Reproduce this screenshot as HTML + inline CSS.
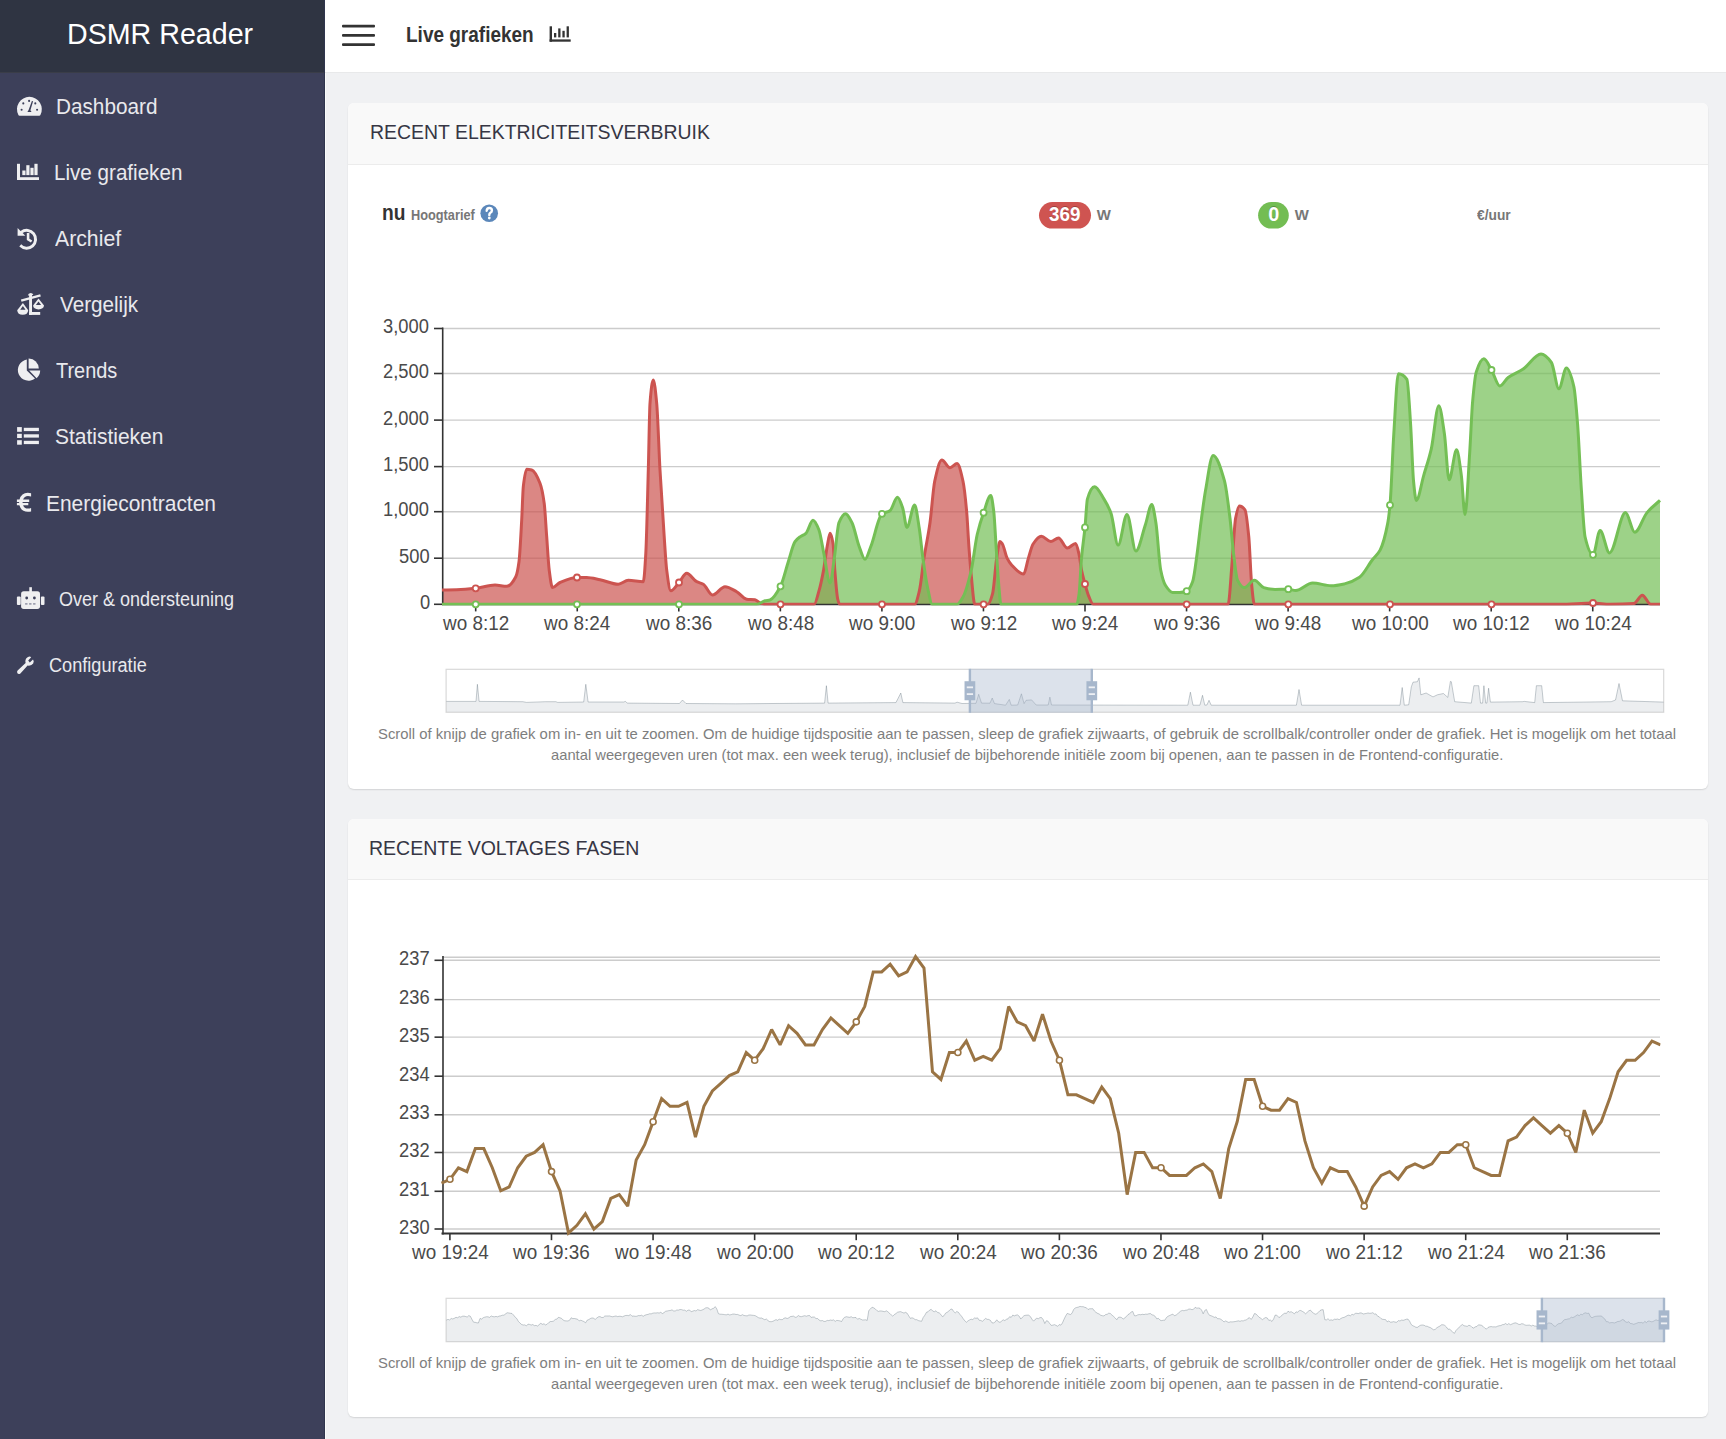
<!DOCTYPE html>
<html><head><meta charset="utf-8"><title>Live grafieken - DSMR Reader</title>
<style>
html,body{margin:0;padding:0}
body{width:1726px;height:1439px;overflow:hidden;position:relative;background:#f0f1f3;font-family:"Liberation Sans",sans-serif}
.sb{position:absolute;left:0;top:0;width:325px;height:1439px;background:#3d405a}
.sbh{position:absolute;left:0;top:0;width:325px;height:72px;background:#2f3442;border-bottom:1px solid #3a3d48}
.sbe{position:absolute;left:324px;top:0;width:1px;height:1439px;background:#30354d}
.sbw{position:absolute;left:325px;top:72px;width:1px;height:1367px;background:#fafbfb}
.tb{position:absolute;left:325px;top:0;width:1401px;height:72px;background:#fff;border-bottom:1px solid #e8e9ea}
.card{position:absolute;left:348px;width:1360px;background:#fff;border-radius:6px;box-shadow:0 1px 1.5px rgba(0,0,0,.12)}
.ch{position:absolute;left:0;top:0;width:1360px;height:61px;background:#f9f9f9;border-bottom:1px solid #ececec;border-radius:6px 6px 0 0}
svg{position:absolute;left:0;top:0}
.t{position:absolute;white-space:nowrap;line-height:1;transform-origin:0 0}
</style></head><body>
<div class="sb"></div><div class="sbh"></div><div class="sbe"></div><div class="sbw"></div>
<div class="tb"></div>
<div class="card" style="top:103px;height:686px"><div class="ch"></div></div>
<div class="card" style="top:819px;height:598px"><div class="ch" style="height:60px"></div></div>
<svg width="1726" height="1439" viewBox="0 0 1726 1439">
<g fill="#efeff1">
<path d="M19.6,115.8 Q18.6,115.8 18.3,114.8 A12.4,12.4 0 1 1 40.5,114.8 Q40.2,115.8 39.2,115.8 Z"/>
<g fill="#3d405a"><circle cx="23.3" cy="103.4" r="1.05"/><circle cx="29.1" cy="100.9" r="1.05"/><circle cx="35.3" cy="103.4" r="1.05"/><circle cx="21.6" cy="109.8" r="1.05"/><circle cx="37.1" cy="109.8" r="1.05"/><path d="M31.9,100.9 L33.1,101.2 L30.4,110.3 L31.6,112.1 L27.4,112.1 L28.6,110.1 Z"/></g>
<rect x="17" y="163.8" width="3" height="16.2"/><rect x="17" y="177.2" width="22" height="2.8"/><rect x="22.3" y="170.5" width="3.2" height="4.6"/><rect x="26.3" y="165.2" width="3.2" height="9.9"/><rect x="30.4" y="167.8" width="3.2" height="7.3"/><rect x="34.4" y="163.8" width="3.2" height="11.3"/>
<path d="M17.6,228 L17.6,235.8 L25.3,235.8 L22.6,233.1 A7.4,7.4 0 1 1 21.2,244.2 L19.3,246.6 A10.4,10.4 0 1 0 20.5,230.9 Z"/><path d="M26.8,233 L29.4,233 L29.4,238.7 L32.3,240.6 L30.9,242.6 L26.8,240 Z"/>
<path d="M20.9,299.4 L40.2,294.2 L40.8,296.6 L21.5,301.8 Z"/><path d="M27.8,295.6 Q28.4,293.1 30.6,293.1 Q32.8,293.1 33.3,295 Z"/><rect x="29.1" y="295" width="2.9" height="19.9"/><rect x="29.1" y="312" width="11.1" height="2.9"/><path d="M17.2,310.2 L22.9,303 L28.2,310.2 Q27.8,314.8 22.7,314.8 Q17.6,314.8 17.2,310.2 Z"/><path d="M33.1,305.6 L38.5,298.5 L44,305.6 Q43.6,309.4 38.5,309.4 Q33.5,309.4 33.1,305.6 Z"/>
<g fill="#3d405a"><path d="M20.2,309.7 L22.9,306.1 L25.5,309.7 Z"/><path d="M35.9,305.1 L38.5,301.6 L41.1,305.1 Z"/></g>
<path d="M26.8,359.6 L26.8,370.6 L35,378.4 A10.6,10.6 0 1 1 26.8,359.6 Z"/><path d="M28.6,358.6 A10,10 0 0 1 38.8,368.6 L28.6,368.6 Z"/><path d="M29.2,370.6 L40.2,370.6 A10.8,10.8 0 0 1 36.6,378.2 Z"/>
<rect x="17.1" y="427.1" width="4.7" height="4.7"/><rect x="23.8" y="427.8" width="15.1" height="3.3"/><rect x="17.1" y="433.8" width="4.7" height="4.2"/><rect x="23.8" y="434.3" width="15.1" height="3.3"/><rect x="17.1" y="440.2" width="4.7" height="4.5"/><rect x="23.8" y="440.8" width="15.1" height="3.3"/>
<path d="M31.1,493.2 L31.1,496.6 Q29.6,496 28,496 Q24.4,496 23.1,499.6 L29.2,499.6 L29.2,502 L22.6,502 L22.6,503 L28.3,503 L28.3,505.2 L23.1,505.2 Q24.2,508.6 28,508.6 Q29.6,508.6 31.1,508 L31.1,511.4 Q29.5,511.8 27.8,511.8 Q21.2,511.8 19.4,505.2 L16.9,505.2 L16.9,503 L19.1,503 L19.1,502 L16.9,502 L16.9,499.6 L19.5,499.6 Q21.4,492.8 27.8,492.8 Q29.5,492.8 31.1,493.2 Z"/>
<rect x="21.1" y="591.3" width="18.9" height="17.6" rx="2.6"/><rect x="29.3" y="587.2" width="2.6" height="5"/><rect x="16.9" y="596.4" width="3.8" height="8.5" rx="1"/><rect x="40.9" y="596.4" width="3.6" height="8.5" rx="1"/>
<g fill="#3d405a"><circle cx="26.7" cy="598" r="1.4"/><circle cx="34.4" cy="598" r="1.4"/></g><g fill="#8a8ca0"><rect x="25.1" y="603.2" width="2.4" height="1.4"/><rect x="29.1" y="603.2" width="2.4" height="1.4"/><rect x="33.1" y="603.2" width="2.4" height="1.4"/></g>
<path d="M17.6,670.6 L25.6,663 Q24.6,659.2 27.6,657.2 Q29.8,656 31.2,657.2 L28.2,660.4 L29.8,662.4 L33,659.4 Q34.4,661 33.2,663.6 Q31.4,666.2 27.6,665.6 L20.4,673.4 Q18.6,674.6 17.4,673.2 Q16.6,671.8 17.6,670.6 Z"/>
</g>
<g fill="#333"><rect x="342" y="24.8" width="33" height="2.8" rx="1"/><rect x="342" y="34" width="33" height="2.8" rx="1"/><rect x="342" y="43.2" width="33" height="2.8" rx="1"/></g>
<g fill="#333"><rect x="549.6" y="26.3" width="2.4" height="15.4"/><rect x="549.6" y="39.4" width="21.1" height="2.3"/><rect x="554" y="33" width="2.3" height="4.4"/><rect x="558.2" y="28.4" width="2.3" height="9"/><rect x="562.4" y="30.8" width="2.3" height="6.6"/><rect x="566.6" y="26.3" width="2.3" height="11.1"/></g>
<circle cx="489.2" cy="213.3" r="8.8" fill="#5b87ba"/>
<path d="M486.7,210.7 Q486.8,208 489.3,208 Q491.9,208 491.9,210.4 Q491.9,211.9 490.4,212.7 Q489.3,213.4 489.3,214.9" fill="none" stroke="#fff" stroke-width="2.4" stroke-linecap="round"/><circle cx="489.3" cy="218" r="1.4" fill="#fff"/>
<rect x="1039" y="202" width="52" height="26.6" rx="13.3" fill="#cf5451"/>
<rect x="1258.1" y="202" width="30.7" height="26.6" rx="13.3" fill="#73bd53"/>
<g>
<line x1="442" y1="558.2" x2="1660" y2="558.2" stroke="#cccccc" stroke-width="1.4"/>
<line x1="442" y1="511.7" x2="1660" y2="511.7" stroke="#cccccc" stroke-width="1.4"/>
<line x1="442" y1="466.6" x2="1660" y2="466.6" stroke="#cccccc" stroke-width="1.4"/>
<line x1="442" y1="420.1" x2="1660" y2="420.1" stroke="#cccccc" stroke-width="1.4"/>
<line x1="442" y1="373.5" x2="1660" y2="373.5" stroke="#cccccc" stroke-width="1.4"/>
<line x1="442" y1="328.5" x2="1660" y2="328.5" stroke="#cccccc" stroke-width="1.4"/>
</g>
<clipPath id="c1"><rect x="442" y="320" width="1219" height="285.5"/></clipPath>
<g clip-path="url(#c1)">
<path d="M442,590C446.9,589.9 451.8,589.85 456.7,589.7C463.03,589.5 469.37,588.95 475.7,588.3C482.13,587.64 488.57,585 495,585C498.9,585 502.8,586.3 506.7,586.3C509.73,586.3 512.77,582.51 515.8,576.7C516.87,574.66 517.93,569.49 519,561.7C519.9,555.13 520.8,536.16 521.7,520C522.23,510.42 522.77,491.45 523.3,486.7C524.43,476.62 525.57,469.2 526.7,469.2C528.37,469.2 530.03,469.55 531.7,470C534.47,470.75 537.23,476.29 540,483.3C541.4,486.85 542.8,493.06 544.2,503.3C545.03,509.4 545.87,525.58 546.7,536.7C547.53,547.82 548.37,563.55 549.2,570C550.3,578.51 551.4,587.5 552.5,587.5C555,587.5 557.5,583.57 560,582.5C565.67,580.07 571.33,577.5 577,577.5C580.23,577.5 583.47,577.5 586.7,577.5C591.13,577.5 595.57,578.83 600,579.7C606.1,580.89 612.2,584.2 618.3,584.2C621.63,584.2 624.97,580.3 628.3,580.3C633.3,580.3 638.3,581.7 643.3,581.7C644.13,581.7 644.97,567.42 645.8,553.3C646.63,539.18 647.47,500.19 648.3,470C648.87,449.47 649.43,410.62 650,403.3C651.1,389.08 652.2,380 653.3,380C654.43,380 655.57,391.67 656.7,403.3C657.8,414.59 658.9,450.34 660,470C661.4,495.02 662.8,516.57 664.2,536.7C665.03,548.68 665.87,563.65 666.7,570C668.07,580.42 669.43,590.8 670.8,590.8C673.53,590.8 676.27,585.5 679,582.5C681.57,579.68 684.13,573.3 686.7,573.3C690.03,573.3 693.37,580 696.7,581.7C698.9,582.82 701.1,582.97 703.3,584.2C706.37,585.91 709.43,595 712.5,595C716.67,595 720.83,586.7 725,586.7C728.9,586.7 732.8,589.56 736.7,591.7C740.03,593.53 743.37,598.84 746.7,599.2C749.47,599.5 752.23,599.38 755,599.7C756.93,599.92 758.87,602.74 760.8,603.3C762.53,603.8 764.27,604.3 766,604.3C770.83,604.3 775.67,604.3 780.5,604.3C791.73,604.3 802.97,604.3 814.2,604.3C815.77,604.3 817.33,596.6 818.9,591.2C820.47,585.8 822.03,578.46 823.6,570C824.8,563.52 826,552.66 827.2,546.3C828.17,541.18 829.13,533.3 830.1,533.3C831.1,533.3 832.1,537.86 833.1,544C833.67,547.48 834.23,563.08 834.8,570C835.8,582.22 836.8,595.5 837.8,599.5C838.4,601.9 839,604.3 839.6,604.3C853.73,604.3 867.87,604.3 882,604.3C892.87,604.3 903.73,604.3 914.6,604.3C916.17,604.3 917.73,597.46 919.3,591.2C920.87,584.94 922.43,568.2 924,558.1C926,545.21 928,536.95 930,522.7C931.57,511.54 933.13,488.53 934.7,481.3C937.07,470.38 939.43,460.1 941.8,460.1C944.53,460.1 947.27,467.8 950,467.8C952.37,467.8 954.73,463.6 957.1,463.6C959.07,463.6 961.03,472.32 963,481.3C964.2,486.78 965.4,497.74 966.6,510.9C967.37,519.3 968.13,535.79 968.9,546.3C969.7,557.26 970.5,567.97 971.3,575.9C972.47,587.47 973.63,604.3 974.8,604.3C977.73,604.3 980.67,604.3 983.6,604.3C985,604.3 986.4,604.3 987.8,604.3C989.4,604.3 991,599.36 992.6,593.6C993.97,588.68 995.33,566.68 996.7,558.1C997.8,551.19 998.9,541.6 1000,541.6C1000.8,541.6 1001.6,542.86 1002.4,544C1003.97,546.23 1005.53,554.95 1007.1,558.1C1008.67,561.25 1010.23,563.54 1011.8,565.2C1015.73,569.36 1019.67,574.1 1023.6,574.1C1025.2,574.1 1026.8,563.15 1028.4,558.1C1029.97,553.15 1031.53,546.35 1033.1,544C1035.83,539.9 1038.57,536.3 1041.3,536.3C1044.47,536.3 1047.63,541.6 1050.8,541.6C1053.37,541.6 1055.93,538 1058.5,538C1061.43,538 1064.37,548.1 1067.3,548.1C1070.07,548.1 1072.83,543.4 1075.6,543.4C1076.77,543.4 1077.93,549.51 1079.1,554.6C1079.9,558.09 1080.7,566 1081.5,570C1082.67,575.83 1083.83,579.78 1085,584C1086.2,588.35 1087.4,593.08 1088.6,595.9C1090.17,599.58 1091.73,604.3 1093.3,604.3C1124.43,604.3 1155.57,604.3 1186.7,604.3C1200.5,604.3 1214.3,604.3 1228.1,604.3C1229.37,604.3 1230.63,579.51 1231.9,565.1C1233.13,551.06 1234.37,524.54 1235.6,518.2C1236.87,511.69 1238.13,506 1239.4,506C1241.27,506 1243.13,507.36 1245,509.8C1246.27,511.46 1247.53,524.03 1248.8,537C1249.73,546.55 1250.67,574.42 1251.6,583.9C1252.53,593.38 1253.47,604.3 1254.4,604.3C1265.7,604.3 1277,604.3 1288.3,604.3C1322.2,604.3 1356.1,604.3 1390,604.3C1423.83,604.3 1457.67,604.3 1491.5,604.3C1514.33,604.3 1537.17,604.3 1560,604.3C1571,604.3 1582,603 1593,603C1598.67,603 1604.33,604.3 1610,604.3C1617.97,604.3 1625.93,604.11 1633.9,603.5C1636.7,603.29 1639.5,595.2 1642.3,595.2C1645.13,595.2 1647.97,604.3 1650.8,604.3C1653.87,604.3 1656.93,604.3 1660,604.3L1660,604.3 L442,604.3 Z" fill="#cc5450" fill-opacity="0.7"/>
<path d="M442,604.3C453.23,604.3 464.47,604.3 475.7,604.3C509.47,604.3 543.23,604.3 577,604.3C611,604.3 645,604.3 679,604.3C704.9,604.3 730.8,604.3 756.7,604.3C759.47,604.3 762.23,601.42 765,600.8C766.67,600.43 768.33,600.43 770,600C773.5,599.09 777,592.9 780.5,586.3C783.1,581.4 785.7,569.67 788.3,561.7C790.53,554.85 792.77,544.87 795,541.7C796.67,539.34 798.33,538.15 800,536.9C801.97,535.42 803.93,535.07 805.9,533.3C808.27,531.17 810.63,520.3 813,520.3C814.97,520.3 816.93,524.98 818.9,529.8C820.47,533.64 822.03,544.75 823.6,552.2C825.77,562.5 827.93,583 830.1,583C831.5,583 832.9,567.37 834.3,558.1C835.87,547.73 837.43,526.47 839,522.7C841.17,517.49 843.33,513.8 845.5,513.8C847.67,513.8 849.83,518.52 852,522.7C854.37,527.26 856.73,540.07 859.1,546.3C861.07,551.48 863.03,559.3 865,559.3C866.97,559.3 868.93,551.18 870.9,546.3C874.6,537.13 878.3,516.14 882,513.8C884.6,512.16 887.2,512.5 889.8,510.9C892.37,509.32 894.93,497.3 897.5,497.3C899.27,497.3 901.03,503.3 902.8,508.5C904.17,512.52 905.53,527.4 906.9,527.4C909.47,527.4 912.03,505 914.6,505C916.17,505 917.73,518.74 919.3,528.6C920.5,536.15 921.7,549.5 922.9,558.1C924.47,569.32 926.03,580.61 927.6,587.7C929.17,594.79 930.73,604.3 932.3,604.3C940.57,604.3 948.83,604.3 957.1,604.3C959.07,604.3 961.03,600.51 963,597.1C965.77,592.31 968.53,581.91 971.3,570C973.27,561.53 975.23,543.09 977.2,534.5C979.33,525.19 981.47,518.71 983.6,512.7C986,505.94 988.4,495.5 990.8,495.5C991.77,495.5 992.73,503.24 993.7,510.9C994.5,517.24 995.3,534.48 996.1,546.3C996.9,558.12 997.7,572.83 998.5,581.8C999.33,591.14 1000.17,604.3 1001,604.3C1026.27,604.3 1051.53,604.3 1076.8,604.3C1077.57,604.3 1078.33,599.01 1079.1,593.6C1079.9,587.96 1080.7,567.05 1081.5,558.1C1082.67,545.04 1083.83,539.24 1085,527.4C1085.8,519.28 1086.6,501.87 1087.4,499.1C1089.77,490.9 1092.13,486.7 1094.5,486.7C1097.67,486.7 1100.83,494.03 1104,499.1C1106.33,502.84 1108.67,506.72 1111,513.2C1113.37,519.78 1115.73,545.1 1118.1,545.1C1121.07,545.1 1124.03,514.4 1127,514.4C1129.97,514.4 1132.93,551 1135.9,551C1139.03,551 1142.17,534.4 1145.3,525.1C1147.47,518.67 1149.63,504.4 1151.8,504.4C1153.17,504.4 1154.53,514.39 1155.9,522.7C1157.5,532.43 1159.1,562.18 1160.7,570C1162.27,577.65 1163.83,582.81 1165.4,585.3C1167.77,589.06 1170.13,592.4 1172.5,592.4C1174.87,592.4 1177.23,592.4 1179.6,592.4C1181.97,592.4 1184.33,591.94 1186.7,591.2C1188.67,590.58 1190.63,586.92 1192.6,581.8C1194.17,577.72 1195.73,563.4 1197.3,552.2C1198.53,543.39 1199.77,531.28 1201,522C1202.53,510.47 1204.07,498.75 1205.6,490.1C1208.1,476 1210.6,455.4 1213.1,455.4C1216.87,455.4 1220.63,467.31 1224.4,480.7C1226.27,487.34 1228.13,503.1 1230,518.2C1231.27,528.44 1232.53,545.78 1233.8,555.8C1235.03,565.55 1236.27,577.67 1237.5,580.2C1239.7,584.72 1241.9,587.6 1244.1,587.6C1247.53,587.6 1250.97,580.2 1254.4,580.2C1257.53,580.2 1260.67,586.71 1263.8,587.6C1267.53,588.66 1271.27,589.5 1275,589.5C1279.43,589.5 1283.87,589.2 1288.3,589.2C1290.77,589.2 1293.23,590.5 1295.7,590.5C1301.33,590.5 1306.97,583 1312.6,583C1318.83,583 1325.07,585.8 1331.3,585.8C1335.7,585.8 1340.1,584.84 1344.5,583.9C1349.5,582.83 1354.5,580.66 1359.5,577.3C1363.87,574.36 1368.23,565.17 1372.6,559.5C1375.1,556.25 1377.6,554.71 1380.1,550.1C1382.6,545.49 1385.1,536.83 1387.6,523.9C1388.4,519.76 1389.2,513.68 1390,505.1C1391.27,491.52 1392.53,453.4 1393.8,433.8C1395.33,410.07 1396.87,373.8 1398.4,373.8C1401.23,373.8 1404.07,375.39 1406.9,379.4C1408.13,381.15 1409.37,405.78 1410.6,424.4C1411.57,438.99 1412.53,470.74 1413.5,480.7C1414.43,490.31 1415.37,500.4 1416.3,500.4C1418.8,500.4 1421.3,483.7 1423.8,475.1C1426.3,466.5 1428.8,459.69 1431.3,448.8C1433.8,437.91 1436.3,405.7 1438.8,405.7C1440.67,405.7 1442.53,421.3 1444.4,433.8C1445.97,444.29 1447.53,479.8 1449.1,479.8C1451.6,479.8 1454.1,449.8 1456.6,449.8C1458.17,449.8 1459.73,463.75 1461.3,475.1C1462.53,484.04 1463.77,514.5 1465,514.5C1466.57,514.5 1468.13,476.4 1469.7,452.6C1470.67,437.91 1471.63,412.77 1472.6,401.9C1473.83,388.03 1475.07,375.72 1476.3,371.9C1478.8,364.15 1481.3,358.8 1483.8,358.8C1486.37,358.8 1488.93,365.75 1491.5,370C1494.27,374.58 1497.03,386 1499.8,386C1502.6,386 1505.4,379.57 1508.2,377.5C1513.2,373.79 1518.2,372.45 1523.2,369.1C1529.13,365.13 1535.07,354.1 1541,354.1C1544.47,354.1 1547.93,357.79 1551.4,362.5C1553.9,365.9 1556.4,388.8 1558.9,388.8C1561.4,388.8 1563.9,368.1 1566.4,368.1C1568.9,368.1 1571.4,376.12 1573.9,386.9C1575.13,392.22 1576.37,408.66 1577.6,424.4C1578.87,440.57 1580.13,471.58 1581.4,490.1C1582.63,508.13 1583.87,531.85 1585.1,537C1587.73,548 1590.37,554.8 1593,554.8C1595.37,554.8 1597.73,530.4 1600.1,530.4C1603.23,530.4 1606.37,552.9 1609.5,552.9C1614.83,552.9 1620.17,512.6 1625.5,512.6C1628.6,512.6 1631.7,532.3 1634.8,532.3C1638.87,532.3 1642.93,517.44 1647,512.6C1651.33,507.44 1655.67,504.47 1660,500.4L1660,604.3 L442,604.3 Z" fill="#74bf55" fill-opacity="0.7"/>
</g>
<line x1="442.7" y1="327.5" x2="442.7" y2="605" stroke="#333333" stroke-width="1.6"/>
<line x1="434" y1="604.3" x2="442.7" y2="604.3" stroke="#333333" stroke-width="1.6"/>
<line x1="434" y1="558.2" x2="442.7" y2="558.2" stroke="#333333" stroke-width="1.6"/>
<line x1="434" y1="511.7" x2="442.7" y2="511.7" stroke="#333333" stroke-width="1.6"/>
<line x1="434" y1="466.6" x2="442.7" y2="466.6" stroke="#333333" stroke-width="1.6"/>
<line x1="434" y1="420.1" x2="442.7" y2="420.1" stroke="#333333" stroke-width="1.6"/>
<line x1="434" y1="373.5" x2="442.7" y2="373.5" stroke="#333333" stroke-width="1.6"/>
<line x1="434" y1="328.5" x2="442.7" y2="328.5" stroke="#333333" stroke-width="1.6"/>
<line x1="442" y1="604.5" x2="1660" y2="604.5" stroke="#333333" stroke-width="1.6"/>
<line x1="475.7" y1="604.5" x2="475.7" y2="611.4" stroke="#333333" stroke-width="1.6"/>
<line x1="577.25" y1="604.5" x2="577.25" y2="611.4" stroke="#333333" stroke-width="1.6"/>
<line x1="678.8" y1="604.5" x2="678.8" y2="611.4" stroke="#333333" stroke-width="1.6"/>
<line x1="780.35" y1="604.5" x2="780.35" y2="611.4" stroke="#333333" stroke-width="1.6"/>
<line x1="881.9" y1="604.5" x2="881.9" y2="611.4" stroke="#333333" stroke-width="1.6"/>
<line x1="983.45" y1="604.5" x2="983.45" y2="611.4" stroke="#333333" stroke-width="1.6"/>
<line x1="1085" y1="604.5" x2="1085" y2="611.4" stroke="#333333" stroke-width="1.6"/>
<line x1="1186.55" y1="604.5" x2="1186.55" y2="611.4" stroke="#333333" stroke-width="1.6"/>
<line x1="1288.1" y1="604.5" x2="1288.1" y2="611.4" stroke="#333333" stroke-width="1.6"/>
<line x1="1389.65" y1="604.5" x2="1389.65" y2="611.4" stroke="#333333" stroke-width="1.6"/>
<line x1="1491.2" y1="604.5" x2="1491.2" y2="611.4" stroke="#333333" stroke-width="1.6"/>
<line x1="1592.75" y1="604.5" x2="1592.75" y2="611.4" stroke="#333333" stroke-width="1.6"/>
<g clip-path="url(#c1)" fill="none" stroke-linejoin="round">
<path d="M442,590C446.9,589.9 451.8,589.85 456.7,589.7C463.03,589.5 469.37,588.95 475.7,588.3C482.13,587.64 488.57,585 495,585C498.9,585 502.8,586.3 506.7,586.3C509.73,586.3 512.77,582.51 515.8,576.7C516.87,574.66 517.93,569.49 519,561.7C519.9,555.13 520.8,536.16 521.7,520C522.23,510.42 522.77,491.45 523.3,486.7C524.43,476.62 525.57,469.2 526.7,469.2C528.37,469.2 530.03,469.55 531.7,470C534.47,470.75 537.23,476.29 540,483.3C541.4,486.85 542.8,493.06 544.2,503.3C545.03,509.4 545.87,525.58 546.7,536.7C547.53,547.82 548.37,563.55 549.2,570C550.3,578.51 551.4,587.5 552.5,587.5C555,587.5 557.5,583.57 560,582.5C565.67,580.07 571.33,577.5 577,577.5C580.23,577.5 583.47,577.5 586.7,577.5C591.13,577.5 595.57,578.83 600,579.7C606.1,580.89 612.2,584.2 618.3,584.2C621.63,584.2 624.97,580.3 628.3,580.3C633.3,580.3 638.3,581.7 643.3,581.7C644.13,581.7 644.97,567.42 645.8,553.3C646.63,539.18 647.47,500.19 648.3,470C648.87,449.47 649.43,410.62 650,403.3C651.1,389.08 652.2,380 653.3,380C654.43,380 655.57,391.67 656.7,403.3C657.8,414.59 658.9,450.34 660,470C661.4,495.02 662.8,516.57 664.2,536.7C665.03,548.68 665.87,563.65 666.7,570C668.07,580.42 669.43,590.8 670.8,590.8C673.53,590.8 676.27,585.5 679,582.5C681.57,579.68 684.13,573.3 686.7,573.3C690.03,573.3 693.37,580 696.7,581.7C698.9,582.82 701.1,582.97 703.3,584.2C706.37,585.91 709.43,595 712.5,595C716.67,595 720.83,586.7 725,586.7C728.9,586.7 732.8,589.56 736.7,591.7C740.03,593.53 743.37,598.84 746.7,599.2C749.47,599.5 752.23,599.38 755,599.7C756.93,599.92 758.87,602.74 760.8,603.3C762.53,603.8 764.27,604.3 766,604.3C770.83,604.3 775.67,604.3 780.5,604.3C791.73,604.3 802.97,604.3 814.2,604.3C815.77,604.3 817.33,596.6 818.9,591.2C820.47,585.8 822.03,578.46 823.6,570C824.8,563.52 826,552.66 827.2,546.3C828.17,541.18 829.13,533.3 830.1,533.3C831.1,533.3 832.1,537.86 833.1,544C833.67,547.48 834.23,563.08 834.8,570C835.8,582.22 836.8,595.5 837.8,599.5C838.4,601.9 839,604.3 839.6,604.3C853.73,604.3 867.87,604.3 882,604.3C892.87,604.3 903.73,604.3 914.6,604.3C916.17,604.3 917.73,597.46 919.3,591.2C920.87,584.94 922.43,568.2 924,558.1C926,545.21 928,536.95 930,522.7C931.57,511.54 933.13,488.53 934.7,481.3C937.07,470.38 939.43,460.1 941.8,460.1C944.53,460.1 947.27,467.8 950,467.8C952.37,467.8 954.73,463.6 957.1,463.6C959.07,463.6 961.03,472.32 963,481.3C964.2,486.78 965.4,497.74 966.6,510.9C967.37,519.3 968.13,535.79 968.9,546.3C969.7,557.26 970.5,567.97 971.3,575.9C972.47,587.47 973.63,604.3 974.8,604.3C977.73,604.3 980.67,604.3 983.6,604.3C985,604.3 986.4,604.3 987.8,604.3C989.4,604.3 991,599.36 992.6,593.6C993.97,588.68 995.33,566.68 996.7,558.1C997.8,551.19 998.9,541.6 1000,541.6C1000.8,541.6 1001.6,542.86 1002.4,544C1003.97,546.23 1005.53,554.95 1007.1,558.1C1008.67,561.25 1010.23,563.54 1011.8,565.2C1015.73,569.36 1019.67,574.1 1023.6,574.1C1025.2,574.1 1026.8,563.15 1028.4,558.1C1029.97,553.15 1031.53,546.35 1033.1,544C1035.83,539.9 1038.57,536.3 1041.3,536.3C1044.47,536.3 1047.63,541.6 1050.8,541.6C1053.37,541.6 1055.93,538 1058.5,538C1061.43,538 1064.37,548.1 1067.3,548.1C1070.07,548.1 1072.83,543.4 1075.6,543.4C1076.77,543.4 1077.93,549.51 1079.1,554.6C1079.9,558.09 1080.7,566 1081.5,570C1082.67,575.83 1083.83,579.78 1085,584C1086.2,588.35 1087.4,593.08 1088.6,595.9C1090.17,599.58 1091.73,604.3 1093.3,604.3C1124.43,604.3 1155.57,604.3 1186.7,604.3C1200.5,604.3 1214.3,604.3 1228.1,604.3C1229.37,604.3 1230.63,579.51 1231.9,565.1C1233.13,551.06 1234.37,524.54 1235.6,518.2C1236.87,511.69 1238.13,506 1239.4,506C1241.27,506 1243.13,507.36 1245,509.8C1246.27,511.46 1247.53,524.03 1248.8,537C1249.73,546.55 1250.67,574.42 1251.6,583.9C1252.53,593.38 1253.47,604.3 1254.4,604.3C1265.7,604.3 1277,604.3 1288.3,604.3C1322.2,604.3 1356.1,604.3 1390,604.3C1423.83,604.3 1457.67,604.3 1491.5,604.3C1514.33,604.3 1537.17,604.3 1560,604.3C1571,604.3 1582,603 1593,603C1598.67,603 1604.33,604.3 1610,604.3C1617.97,604.3 1625.93,604.11 1633.9,603.5C1636.7,603.29 1639.5,595.2 1642.3,595.2C1645.13,595.2 1647.97,604.3 1650.8,604.3C1653.87,604.3 1656.93,604.3 1660,604.3" stroke="#cc5450" stroke-width="3"/>
<path d="M442,604.3C453.23,604.3 464.47,604.3 475.7,604.3C509.47,604.3 543.23,604.3 577,604.3C611,604.3 645,604.3 679,604.3C704.9,604.3 730.8,604.3 756.7,604.3C759.47,604.3 762.23,601.42 765,600.8C766.67,600.43 768.33,600.43 770,600C773.5,599.09 777,592.9 780.5,586.3C783.1,581.4 785.7,569.67 788.3,561.7C790.53,554.85 792.77,544.87 795,541.7C796.67,539.34 798.33,538.15 800,536.9C801.97,535.42 803.93,535.07 805.9,533.3C808.27,531.17 810.63,520.3 813,520.3C814.97,520.3 816.93,524.98 818.9,529.8C820.47,533.64 822.03,544.75 823.6,552.2C825.77,562.5 827.93,583 830.1,583C831.5,583 832.9,567.37 834.3,558.1C835.87,547.73 837.43,526.47 839,522.7C841.17,517.49 843.33,513.8 845.5,513.8C847.67,513.8 849.83,518.52 852,522.7C854.37,527.26 856.73,540.07 859.1,546.3C861.07,551.48 863.03,559.3 865,559.3C866.97,559.3 868.93,551.18 870.9,546.3C874.6,537.13 878.3,516.14 882,513.8C884.6,512.16 887.2,512.5 889.8,510.9C892.37,509.32 894.93,497.3 897.5,497.3C899.27,497.3 901.03,503.3 902.8,508.5C904.17,512.52 905.53,527.4 906.9,527.4C909.47,527.4 912.03,505 914.6,505C916.17,505 917.73,518.74 919.3,528.6C920.5,536.15 921.7,549.5 922.9,558.1C924.47,569.32 926.03,580.61 927.6,587.7C929.17,594.79 930.73,604.3 932.3,604.3C940.57,604.3 948.83,604.3 957.1,604.3C959.07,604.3 961.03,600.51 963,597.1C965.77,592.31 968.53,581.91 971.3,570C973.27,561.53 975.23,543.09 977.2,534.5C979.33,525.19 981.47,518.71 983.6,512.7C986,505.94 988.4,495.5 990.8,495.5C991.77,495.5 992.73,503.24 993.7,510.9C994.5,517.24 995.3,534.48 996.1,546.3C996.9,558.12 997.7,572.83 998.5,581.8C999.33,591.14 1000.17,604.3 1001,604.3C1026.27,604.3 1051.53,604.3 1076.8,604.3C1077.57,604.3 1078.33,599.01 1079.1,593.6C1079.9,587.96 1080.7,567.05 1081.5,558.1C1082.67,545.04 1083.83,539.24 1085,527.4C1085.8,519.28 1086.6,501.87 1087.4,499.1C1089.77,490.9 1092.13,486.7 1094.5,486.7C1097.67,486.7 1100.83,494.03 1104,499.1C1106.33,502.84 1108.67,506.72 1111,513.2C1113.37,519.78 1115.73,545.1 1118.1,545.1C1121.07,545.1 1124.03,514.4 1127,514.4C1129.97,514.4 1132.93,551 1135.9,551C1139.03,551 1142.17,534.4 1145.3,525.1C1147.47,518.67 1149.63,504.4 1151.8,504.4C1153.17,504.4 1154.53,514.39 1155.9,522.7C1157.5,532.43 1159.1,562.18 1160.7,570C1162.27,577.65 1163.83,582.81 1165.4,585.3C1167.77,589.06 1170.13,592.4 1172.5,592.4C1174.87,592.4 1177.23,592.4 1179.6,592.4C1181.97,592.4 1184.33,591.94 1186.7,591.2C1188.67,590.58 1190.63,586.92 1192.6,581.8C1194.17,577.72 1195.73,563.4 1197.3,552.2C1198.53,543.39 1199.77,531.28 1201,522C1202.53,510.47 1204.07,498.75 1205.6,490.1C1208.1,476 1210.6,455.4 1213.1,455.4C1216.87,455.4 1220.63,467.31 1224.4,480.7C1226.27,487.34 1228.13,503.1 1230,518.2C1231.27,528.44 1232.53,545.78 1233.8,555.8C1235.03,565.55 1236.27,577.67 1237.5,580.2C1239.7,584.72 1241.9,587.6 1244.1,587.6C1247.53,587.6 1250.97,580.2 1254.4,580.2C1257.53,580.2 1260.67,586.71 1263.8,587.6C1267.53,588.66 1271.27,589.5 1275,589.5C1279.43,589.5 1283.87,589.2 1288.3,589.2C1290.77,589.2 1293.23,590.5 1295.7,590.5C1301.33,590.5 1306.97,583 1312.6,583C1318.83,583 1325.07,585.8 1331.3,585.8C1335.7,585.8 1340.1,584.84 1344.5,583.9C1349.5,582.83 1354.5,580.66 1359.5,577.3C1363.87,574.36 1368.23,565.17 1372.6,559.5C1375.1,556.25 1377.6,554.71 1380.1,550.1C1382.6,545.49 1385.1,536.83 1387.6,523.9C1388.4,519.76 1389.2,513.68 1390,505.1C1391.27,491.52 1392.53,453.4 1393.8,433.8C1395.33,410.07 1396.87,373.8 1398.4,373.8C1401.23,373.8 1404.07,375.39 1406.9,379.4C1408.13,381.15 1409.37,405.78 1410.6,424.4C1411.57,438.99 1412.53,470.74 1413.5,480.7C1414.43,490.31 1415.37,500.4 1416.3,500.4C1418.8,500.4 1421.3,483.7 1423.8,475.1C1426.3,466.5 1428.8,459.69 1431.3,448.8C1433.8,437.91 1436.3,405.7 1438.8,405.7C1440.67,405.7 1442.53,421.3 1444.4,433.8C1445.97,444.29 1447.53,479.8 1449.1,479.8C1451.6,479.8 1454.1,449.8 1456.6,449.8C1458.17,449.8 1459.73,463.75 1461.3,475.1C1462.53,484.04 1463.77,514.5 1465,514.5C1466.57,514.5 1468.13,476.4 1469.7,452.6C1470.67,437.91 1471.63,412.77 1472.6,401.9C1473.83,388.03 1475.07,375.72 1476.3,371.9C1478.8,364.15 1481.3,358.8 1483.8,358.8C1486.37,358.8 1488.93,365.75 1491.5,370C1494.27,374.58 1497.03,386 1499.8,386C1502.6,386 1505.4,379.57 1508.2,377.5C1513.2,373.79 1518.2,372.45 1523.2,369.1C1529.13,365.13 1535.07,354.1 1541,354.1C1544.47,354.1 1547.93,357.79 1551.4,362.5C1553.9,365.9 1556.4,388.8 1558.9,388.8C1561.4,388.8 1563.9,368.1 1566.4,368.1C1568.9,368.1 1571.4,376.12 1573.9,386.9C1575.13,392.22 1576.37,408.66 1577.6,424.4C1578.87,440.57 1580.13,471.58 1581.4,490.1C1582.63,508.13 1583.87,531.85 1585.1,537C1587.73,548 1590.37,554.8 1593,554.8C1595.37,554.8 1597.73,530.4 1600.1,530.4C1603.23,530.4 1606.37,552.9 1609.5,552.9C1614.83,552.9 1620.17,512.6 1625.5,512.6C1628.6,512.6 1631.7,532.3 1634.8,532.3C1638.87,532.3 1642.93,517.44 1647,512.6C1651.33,507.44 1655.67,504.47 1660,500.4" stroke="#74bf55" stroke-width="3"/>
</g>
<circle cx="475.7" cy="588.3" r="3" fill="#fff" stroke="#cc5450" stroke-width="1.8"/>
<circle cx="577" cy="577.5" r="3" fill="#fff" stroke="#cc5450" stroke-width="1.8"/>
<circle cx="679" cy="582.5" r="3" fill="#fff" stroke="#cc5450" stroke-width="1.8"/>
<circle cx="780.5" cy="604.3" r="3" fill="#fff" stroke="#cc5450" stroke-width="1.8"/>
<circle cx="882" cy="604.3" r="3" fill="#fff" stroke="#cc5450" stroke-width="1.8"/>
<circle cx="983.6" cy="604.3" r="3" fill="#fff" stroke="#cc5450" stroke-width="1.8"/>
<circle cx="1085" cy="584" r="3" fill="#fff" stroke="#cc5450" stroke-width="1.8"/>
<circle cx="1186.7" cy="604.3" r="3" fill="#fff" stroke="#cc5450" stroke-width="1.8"/>
<circle cx="1288.3" cy="604.3" r="3" fill="#fff" stroke="#cc5450" stroke-width="1.8"/>
<circle cx="1390" cy="604.3" r="3" fill="#fff" stroke="#cc5450" stroke-width="1.8"/>
<circle cx="1491.5" cy="604.3" r="3" fill="#fff" stroke="#cc5450" stroke-width="1.8"/>
<circle cx="1593" cy="603" r="3" fill="#fff" stroke="#cc5450" stroke-width="1.8"/>
<circle cx="475.7" cy="604.3" r="3" fill="#fff" stroke="#74bf55" stroke-width="1.8"/>
<circle cx="577" cy="604.3" r="3" fill="#fff" stroke="#74bf55" stroke-width="1.8"/>
<circle cx="679" cy="604.3" r="3" fill="#fff" stroke="#74bf55" stroke-width="1.8"/>
<circle cx="780.5" cy="586.3" r="3" fill="#fff" stroke="#74bf55" stroke-width="1.8"/>
<circle cx="882" cy="513.8" r="3" fill="#fff" stroke="#74bf55" stroke-width="1.8"/>
<circle cx="983.6" cy="512.7" r="3" fill="#fff" stroke="#74bf55" stroke-width="1.8"/>
<circle cx="1085" cy="527.4" r="3" fill="#fff" stroke="#74bf55" stroke-width="1.8"/>
<circle cx="1186.7" cy="591.2" r="3" fill="#fff" stroke="#74bf55" stroke-width="1.8"/>
<circle cx="1288.3" cy="589.2" r="3" fill="#fff" stroke="#74bf55" stroke-width="1.8"/>
<circle cx="1390" cy="505.1" r="3" fill="#fff" stroke="#74bf55" stroke-width="1.8"/>
<circle cx="1491.5" cy="370" r="3" fill="#fff" stroke="#74bf55" stroke-width="1.8"/>
<circle cx="1593" cy="554.8" r="3" fill="#fff" stroke="#74bf55" stroke-width="1.8"/>
<rect x="446.1" y="669.3" width="1217.6" height="43" fill="none" stroke="#d9d9d9" stroke-width="1.2"/>
<path d="M446.4,701.4 L476,701.4 L477.4,684.3 L479.1,701.4 L522.9,701.7 L526.4,702.4 L545.5,701.7 L555.9,701.7 L557.7,702.4 L583.7,702 L585.8,684.3 L588.1,702 L623.7,702 L625.5,701.4 L627.2,703.1 L679.4,703.5 L682.5,700 L686,703.5 L736,703.8 L824.6,703.1 L826.4,685.7 L828.1,703.1 L895.9,702.6 L900.8,693 L902.9,702.6 L955,703.1 L957.1,702.2 L962,703.5 L976,703.3 L978.7,694.3 L981.5,703.1 L990,703.2 L992.2,698 L994.5,703.6 L1005.6,705.2 L1009.3,699.4 L1011.2,705.2 L1017.7,705 L1021.4,693.8 L1024.1,703.6 L1026,700.3 L1031.6,699.9 L1036.2,705 L1048.2,705 L1049.9,697.1 L1051.5,705 L1187.8,705.2 L1190.4,692.2 L1193,705.2 L1199.9,705.2 L1202.5,695.3 L1204.8,705.2 L1206.9,705 L1209,700.3 L1211.2,705.2 L1296.4,705.2 L1299,689.5 L1301.6,705.2 L1400,705.2 L1402.2,687.5 L1404.3,705.2 L1408.7,704.8 L1411.3,686.9 L1413,682.2 L1417.4,681.7 L1419.1,677.9 L1420.8,694.8 L1426.1,693 L1433,696.9 L1437.4,694.8 L1443.4,693.5 L1447.8,697.4 L1450.4,681.4 L1451.3,681.7 L1454.7,701.7 L1471.3,703.1 L1473.9,685.7 L1478.7,685.7 L1480.5,703.1 L1482.6,703.1 L1483.9,685.7 L1485.7,703.1 L1486.9,703.1 L1488.6,688.2 L1490.4,702.1 L1522.5,701.7 L1524.3,701.4 L1534.7,702.6 L1536.4,685.7 L1541.7,685.7 L1543.4,702.6 L1611.2,701.7 L1615.5,700 L1619,683.5 L1622.5,700.8 L1663.5,702.1 L1663.5,712 L446.4,712 Z" fill="rgb(47,69,84)" fill-opacity="0.09"/>
<path d="M446.4,701.4 L476,701.4 L477.4,684.3 L479.1,701.4 L522.9,701.7 L526.4,702.4 L545.5,701.7 L555.9,701.7 L557.7,702.4 L583.7,702 L585.8,684.3 L588.1,702 L623.7,702 L625.5,701.4 L627.2,703.1 L679.4,703.5 L682.5,700 L686,703.5 L736,703.8 L824.6,703.1 L826.4,685.7 L828.1,703.1 L895.9,702.6 L900.8,693 L902.9,702.6 L955,703.1 L957.1,702.2 L962,703.5 L976,703.3 L978.7,694.3 L981.5,703.1 L990,703.2 L992.2,698 L994.5,703.6 L1005.6,705.2 L1009.3,699.4 L1011.2,705.2 L1017.7,705 L1021.4,693.8 L1024.1,703.6 L1026,700.3 L1031.6,699.9 L1036.2,705 L1048.2,705 L1049.9,697.1 L1051.5,705 L1187.8,705.2 L1190.4,692.2 L1193,705.2 L1199.9,705.2 L1202.5,695.3 L1204.8,705.2 L1206.9,705 L1209,700.3 L1211.2,705.2 L1296.4,705.2 L1299,689.5 L1301.6,705.2 L1400,705.2 L1402.2,687.5 L1404.3,705.2 L1408.7,704.8 L1411.3,686.9 L1413,682.2 L1417.4,681.7 L1419.1,677.9 L1420.8,694.8 L1426.1,693 L1433,696.9 L1437.4,694.8 L1443.4,693.5 L1447.8,697.4 L1450.4,681.4 L1451.3,681.7 L1454.7,701.7 L1471.3,703.1 L1473.9,685.7 L1478.7,685.7 L1480.5,703.1 L1482.6,703.1 L1483.9,685.7 L1485.7,703.1 L1486.9,703.1 L1488.6,688.2 L1490.4,702.1 L1522.5,701.7 L1524.3,701.4 L1534.7,702.6 L1536.4,685.7 L1541.7,685.7 L1543.4,702.6 L1611.2,701.7 L1615.5,700 L1619,683.5 L1622.5,700.8 L1663.5,702.1" fill="none" stroke="rgb(47,69,84)" stroke-opacity="0.3" stroke-width="0.9"/>
<rect x="969.9" y="668.8" width="121.9" height="44" fill="rgb(167,183,204)" fill-opacity="0.4"/>
<rect x="968.7" y="668.8" width="2.4" height="44" fill="#a7b7cc"/>
<rect x="964.53" y="681.21" width="10.74" height="19.06" fill="#a7b7cc"/>
<rect x="966.77" y="686.45" width="6.27" height="1.79" fill="#eef0f4"/>
<rect x="966.77" y="693.23" width="6.27" height="1.79" fill="#eef0f4"/>
<rect x="1090.6" y="668.8" width="2.4" height="44" fill="#a7b7cc"/>
<rect x="1086.43" y="681.21" width="10.74" height="19.06" fill="#a7b7cc"/>
<rect x="1088.67" y="686.45" width="6.27" height="1.79" fill="#eef0f4"/>
<rect x="1088.67" y="693.23" width="6.27" height="1.79" fill="#eef0f4"/>
<line x1="442" y1="957.3" x2="1660" y2="957.3" stroke="#cccccc" stroke-width="1.4"/>
<line x1="442" y1="1229" x2="1660" y2="1229" stroke="#cccccc" stroke-width="1.4"/>
<line x1="442" y1="1191.3" x2="1660" y2="1191.3" stroke="#cccccc" stroke-width="1.4"/>
<line x1="442" y1="1152.5" x2="1660" y2="1152.5" stroke="#cccccc" stroke-width="1.4"/>
<line x1="442" y1="1114.8" x2="1660" y2="1114.8" stroke="#cccccc" stroke-width="1.4"/>
<line x1="442" y1="1076.2" x2="1660" y2="1076.2" stroke="#cccccc" stroke-width="1.4"/>
<line x1="442" y1="1037.15" x2="1660" y2="1037.15" stroke="#cccccc" stroke-width="1.4"/>
<line x1="442" y1="999.6" x2="1660" y2="999.6" stroke="#cccccc" stroke-width="1.4"/>
<line x1="442" y1="960.3" x2="1660" y2="960.3" stroke="#cccccc" stroke-width="1.4"/>
<line x1="443" y1="956" x2="443" y2="1234.4" stroke="#333333" stroke-width="1.6"/>
<line x1="434.5" y1="1229" x2="443" y2="1229" stroke="#333333" stroke-width="1.6"/>
<line x1="434.5" y1="1191.3" x2="443" y2="1191.3" stroke="#333333" stroke-width="1.6"/>
<line x1="434.5" y1="1152.5" x2="443" y2="1152.5" stroke="#333333" stroke-width="1.6"/>
<line x1="434.5" y1="1114.8" x2="443" y2="1114.8" stroke="#333333" stroke-width="1.6"/>
<line x1="434.5" y1="1076.2" x2="443" y2="1076.2" stroke="#333333" stroke-width="1.6"/>
<line x1="434.5" y1="1037.15" x2="443" y2="1037.15" stroke="#333333" stroke-width="1.6"/>
<line x1="434.5" y1="999.6" x2="443" y2="999.6" stroke="#333333" stroke-width="1.6"/>
<line x1="434.5" y1="960.3" x2="443" y2="960.3" stroke="#333333" stroke-width="1.6"/>
<line x1="441.5" y1="1233.6" x2="1660" y2="1233.6" stroke="#333333" stroke-width="2"/>
<line x1="449.9" y1="1233.6" x2="449.9" y2="1240.2" stroke="#333333" stroke-width="1.6"/>
<line x1="551.48" y1="1233.6" x2="551.48" y2="1240.2" stroke="#333333" stroke-width="1.6"/>
<line x1="653.06" y1="1233.6" x2="653.06" y2="1240.2" stroke="#333333" stroke-width="1.6"/>
<line x1="754.64" y1="1233.6" x2="754.64" y2="1240.2" stroke="#333333" stroke-width="1.6"/>
<line x1="856.22" y1="1233.6" x2="856.22" y2="1240.2" stroke="#333333" stroke-width="1.6"/>
<line x1="957.8" y1="1233.6" x2="957.8" y2="1240.2" stroke="#333333" stroke-width="1.6"/>
<line x1="1059.38" y1="1233.6" x2="1059.38" y2="1240.2" stroke="#333333" stroke-width="1.6"/>
<line x1="1160.96" y1="1233.6" x2="1160.96" y2="1240.2" stroke="#333333" stroke-width="1.6"/>
<line x1="1262.54" y1="1233.6" x2="1262.54" y2="1240.2" stroke="#333333" stroke-width="1.6"/>
<line x1="1364.12" y1="1233.6" x2="1364.12" y2="1240.2" stroke="#333333" stroke-width="1.6"/>
<line x1="1465.7" y1="1233.6" x2="1465.7" y2="1240.2" stroke="#333333" stroke-width="1.6"/>
<line x1="1567.28" y1="1233.6" x2="1567.28" y2="1240.2" stroke="#333333" stroke-width="1.6"/>
<clipPath id="c2"><rect x="441" y="950" width="1219.5" height="290"/></clipPath>
<path d="M441.5,1183.12 L449.96,1179.28 L458.43,1167.76 L466.89,1171.6 L475.36,1148.56 L483.82,1148.56 L492.29,1167.76 L500.75,1190.8 L509.22,1186.96 L517.68,1167.76 L526.15,1156.24 L534.62,1152.4 L543.08,1144.72 L551.54,1171.6 L560.01,1190.8 L568.48,1233.04 L576.94,1225.36 L585.4,1213.84 L593.87,1229.2 L602.34,1221.52 L610.8,1198.48 L619.26,1194.64 L627.73,1206.16 L636.19,1160.08 L644.66,1144.72 L653.12,1121.68 L661.59,1098.64 L670.06,1106.32 L678.52,1106.32 L686.99,1102.48 L695.45,1137.04 L703.91,1106.32 L712.38,1090.96 L720.85,1083.28 L729.31,1075.6 L737.77,1071.76 L746.24,1052.56 L754.7,1060.24 L763.17,1048.72 L771.63,1029.52 L780.1,1044.88 L788.57,1025.68 L797.03,1033.36 L805.5,1044.88 L813.96,1044.88 L822.42,1029.52 L830.89,1018 L839.36,1025.68 L847.82,1033.36 L856.28,1021.84 L864.75,1006.48 L873.21,971.92 L881.68,971.92 L890.14,964.24 L898.61,975.76 L907.08,971.92 L915.54,956.56 L924,968.08 L932.47,1071.76 L940.93,1079.44 L949.4,1052.56 L957.87,1052.56 L966.33,1041.04 L974.79,1060.24 L983.26,1056.4 L991.73,1060.24 L1000.19,1048.72 L1008.65,1006.48 L1017.12,1021.84 L1025.59,1025.68 L1034.05,1041.04 L1042.51,1014.16 L1050.98,1041.04 L1059.44,1060.24 L1067.91,1094.8 L1076.38,1094.8 L1084.84,1098.64 L1093.3,1102.48 L1101.77,1087.12 L1110.24,1098.64 L1118.7,1133.2 L1127.16,1194.64 L1135.63,1152.4 L1144.1,1152.4 L1152.56,1167.76 L1161.03,1167.76 L1169.49,1175.44 L1177.95,1175.44 L1186.42,1175.44 L1194.88,1167.76 L1203.35,1163.92 L1211.82,1171.6 L1220.28,1198.48 L1228.74,1148.56 L1237.21,1121.68 L1245.67,1079.44 L1254.14,1079.44 L1262.61,1106.32 L1271.07,1110.16 L1279.53,1110.16 L1288,1098.64 L1296.47,1102.48 L1304.93,1140.88 L1313.39,1167.76 L1321.86,1183.12 L1330.32,1167.76 L1338.79,1171.6 L1347.26,1171.6 L1355.72,1186.96 L1364.18,1206.16 L1372.65,1186.96 L1381.12,1175.44 L1389.58,1171.6 L1398.05,1179.28 L1406.51,1167.76 L1414.97,1163.92 L1423.44,1167.76 L1431.9,1163.92 L1440.37,1152.4 L1448.84,1152.4 L1457.3,1144.72 L1465.76,1144.72 L1474.23,1167.76 L1482.69,1171.6 L1491.16,1175.44 L1499.62,1175.44 L1508.09,1140.88 L1516.56,1137.04 L1525.02,1125.52 L1533.48,1117.84 L1541.95,1125.52 L1550.41,1133.2 L1558.88,1125.52 L1567.35,1133.2 L1575.81,1152.4 L1584.28,1110.16 L1592.74,1133.2 L1601.2,1121.68 L1609.67,1098.64 L1618.13,1071.76 L1626.6,1060.24 L1635.07,1060.24 L1643.53,1052.56 L1651.99,1041.04 L1660.46,1044.88" clip-path="url(#c2)" fill="none" stroke="#9a7444" stroke-width="3" stroke-linejoin="miter" stroke-miterlimit="2.2"/>
<circle cx="449.96" cy="1179.28" r="3" fill="#fff" stroke="#9a7444" stroke-width="1.6"/>
<circle cx="551.54" cy="1171.6" r="3" fill="#fff" stroke="#9a7444" stroke-width="1.6"/>
<circle cx="653.12" cy="1121.68" r="3" fill="#fff" stroke="#9a7444" stroke-width="1.6"/>
<circle cx="754.7" cy="1060.24" r="3" fill="#fff" stroke="#9a7444" stroke-width="1.6"/>
<circle cx="856.28" cy="1021.84" r="3" fill="#fff" stroke="#9a7444" stroke-width="1.6"/>
<circle cx="957.87" cy="1052.56" r="3" fill="#fff" stroke="#9a7444" stroke-width="1.6"/>
<circle cx="1059.44" cy="1060.24" r="3" fill="#fff" stroke="#9a7444" stroke-width="1.6"/>
<circle cx="1161.03" cy="1167.76" r="3" fill="#fff" stroke="#9a7444" stroke-width="1.6"/>
<circle cx="1262.61" cy="1106.32" r="3" fill="#fff" stroke="#9a7444" stroke-width="1.6"/>
<circle cx="1364.18" cy="1206.16" r="3" fill="#fff" stroke="#9a7444" stroke-width="1.6"/>
<circle cx="1465.76" cy="1144.72" r="3" fill="#fff" stroke="#9a7444" stroke-width="1.6"/>
<circle cx="1567.35" cy="1133.2" r="3" fill="#fff" stroke="#9a7444" stroke-width="1.6"/>
<rect x="446.1" y="1298.3" width="1217.6" height="43.4" fill="none" stroke="#d9d9d9" stroke-width="1.2"/>
<path d="M446.4,1320.08 L448,1319.39 L449.6,1319.91 L451.2,1318.49 L452.8,1318.94 L454.4,1318.26 L456,1317.32 L457.6,1317.75 L459.2,1316.59 L460.8,1317.11 L462.4,1316.25 L464,1316.09 L465.6,1316.5 L467.2,1317.02 L468.8,1315.56 L470.4,1316.34 L472,1319.45 L473.6,1322.2 L475.2,1322.32 L476.8,1322.77 L478.4,1322.99 L480,1318.43 L481.6,1319.08 L483.2,1317.73 L484.8,1317.14 L486.4,1316.77 L488,1316.79 L489.6,1317.38 L491.2,1315.91 L492.8,1316.62 L494.4,1316.81 L496,1316.42 L497.6,1316.83 L499.2,1316.05 L500.8,1315.83 L502.4,1315.21 L504,1315.18 L505.6,1313.85 L507.2,1312.76 L508.8,1312.98 L510.4,1313.25 L512,1313.49 L513.6,1315.11 L515.2,1317.18 L516.8,1318.6 L518.4,1321.43 L520,1323.05 L521.6,1324.48 L523.2,1325.01 L524.8,1324.89 L526.4,1325.9 L528,1324.11 L529.6,1324.41 L531.2,1325.03 L532.8,1324.5 L534.4,1325.65 L536,1325.4 L537.6,1326 L539.2,1324.58 L540.8,1323.28 L542.4,1324.3 L544,1323.76 L545.6,1324.92 L547.2,1324.17 L548.8,1322.54 L550.4,1321.51 L552,1321.51 L553.6,1321.01 L555.2,1319.46 L556.8,1319.11 L558.4,1317.33 L560,1317.79 L561.6,1318.41 L563.2,1320.08 L564.8,1320.81 L566.4,1320.89 L568,1320.96 L569.6,1320.19 L571.2,1317.76 L572.8,1318.57 L574.4,1318.49 L576,1318.85 L577.6,1319.19 L579.2,1320.92 L580.8,1320.21 L582.4,1320.88 L584,1321.58 L585.6,1322.79 L587.2,1320.14 L588.8,1319.57 L590.4,1318.53 L592,1317.9 L593.6,1318.26 L595.2,1319.4 L596.8,1318.01 L598.4,1316.84 L600,1316.58 L601.6,1317.45 L603.2,1317.52 L604.8,1315.99 L606.4,1315.97 L608,1316 L609.6,1315.93 L611.2,1316.47 L612.8,1316.77 L614.4,1316.3 L616,1315.95 L617.6,1316.62 L619.2,1316.27 L620.8,1316.37 L622.4,1316.8 L624,1316.07 L625.6,1315.49 L627.2,1315.41 L628.8,1315.6 L630.4,1314.56 L632,1316.17 L633.6,1316.03 L635.2,1316.29 L636.8,1316.23 L638.4,1315.59 L640,1315.68 L641.6,1315.23 L643.2,1316.27 L644.8,1315.24 L646.4,1314.7 L648,1314.4 L649.6,1313.76 L651.2,1313.86 L652.8,1313.17 L654.4,1312.91 L656,1313.01 L657.6,1312.75 L659.2,1313.05 L660.8,1312.27 L662.4,1313.55 L664,1312.6 L665.6,1311.27 L667.2,1310.97 L668.8,1310.66 L670.4,1310.46 L672,1309.82 L673.6,1310.92 L675.2,1310.98 L676.8,1310 L678.4,1310.13 L680,1309.51 L681.6,1309.64 L683.2,1310.18 L684.8,1310.14 L686.4,1311.25 L688,1310.15 L689.6,1310 L691.2,1311.77 L692.8,1311.11 L694.4,1310.53 L696,1311.01 L697.6,1309.65 L699.2,1310.11 L700.8,1310.49 L702.4,1309.85 L704,1309.12 L705.6,1307.9 L707.2,1307.66 L708.8,1308.1 L710.4,1309.99 L712,1308.84 L713.6,1308.35 L715.2,1306.6 L716.8,1308.93 L718.4,1313.64 L720,1314.21 L721.6,1314.23 L723.2,1314.4 L724.8,1314.67 L726.4,1314.79 L728,1314.12 L729.6,1314.9 L731.2,1314.64 L732.8,1314.05 L734.4,1314.05 L736,1314.5 L737.6,1314.43 L739.2,1315.17 L740.8,1315.61 L742.4,1314.66 L744,1315.5 L745.6,1315.7 L747.2,1315.87 L748.8,1315.03 L750.4,1314.99 L752,1315.23 L753.6,1315.39 L755.2,1315.63 L756.8,1316.61 L758.4,1317.65 L760,1318.11 L761.6,1318.02 L763.2,1318.9 L764.8,1319.72 L766.4,1319 L768,1320.6 L769.6,1321.61 L771.2,1321.72 L772.8,1321.31 L774.4,1320.47 L776,1319.58 L777.6,1320.33 L779.2,1319.15 L780.8,1319.64 L782.4,1319.6 L784,1318.21 L785.6,1317.87 L787.2,1318.5 L788.8,1317.81 L790.4,1316.61 L792,1316.33 L793.6,1316.16 L795.2,1317.32 L796.8,1316.93 L798.4,1315.54 L800,1316.56 L801.6,1316.63 L803.2,1316.09 L804.8,1315.7 L806.4,1316.21 L808,1315.62 L809.6,1315.57 L811.2,1317.45 L812.8,1317.03 L814.4,1317.05 L816,1318.6 L817.6,1318.51 L819.2,1320.12 L820.8,1320.85 L822.4,1320.56 L824,1321.45 L825.6,1321.31 L827.2,1320.4 L828.8,1320.58 L830.4,1320.03 L832,1320.37 L833.6,1319.89 L835.2,1321.34 L836.8,1320.39 L838.4,1320.62 L840,1320.89 L841.6,1321.52 L843.2,1318.63 L844.8,1317.19 L846.4,1316.72 L848,1317.05 L849.6,1317.32 L851.2,1316.69 L852.8,1317.73 L854.4,1317.55 L856,1317.51 L857.6,1319.22 L859.2,1318.38 L860.8,1319.21 L862.4,1319.95 L864,1319.93 L865.6,1319.8 L867.2,1320.43 L868.8,1310.46 L870.4,1309.06 L872,1307.2 L873.6,1307.81 L875.2,1308.85 L876.8,1310.5 L878.4,1311.39 L880,1310.91 L881.6,1311.01 L883.2,1311.37 L884.8,1311.64 L886.4,1310.8 L888,1311.9 L889.6,1313.31 L891.2,1314.92 L892.8,1316.15 L894.4,1314.53 L896,1313.49 L897.6,1312.2 L899.2,1311.84 L900.8,1311.68 L902.4,1312.47 L904,1313.07 L905.6,1312.32 L907.2,1313.34 L908.8,1315.94 L910.4,1318.36 L912,1317.76 L913.6,1318.4 L915.2,1319.64 L916.8,1319.64 L918.4,1320.61 L920,1320.97 L921.6,1321.26 L923.2,1317.46 L924.8,1315.31 L926.4,1312.38 L928,1311.79 L929.6,1310.09 L931.2,1309.33 L932.8,1311.1 L934.4,1311.68 L936,1310.76 L937.6,1312.51 L939.2,1312.87 L940.8,1314.38 L942.4,1316.64 L944,1315.69 L945.6,1313.14 L947.2,1312.28 L948.8,1311.09 L950.4,1309.43 L952,1308.96 L953.6,1311.43 L955.2,1312.91 L956.8,1311.49 L958.4,1312.31 L960,1314.49 L961.6,1316.29 L963.2,1318.7 L964.8,1320.82 L966.4,1322.22 L968,1320.89 L969.6,1319.9 L971.2,1319.22 L972.8,1319.55 L974.4,1317.99 L976,1318.28 L977.6,1317.87 L979.2,1320.28 L980.8,1320.44 L982.4,1321.26 L984,1319.89 L985.6,1318.38 L987.2,1319.33 L988.8,1319.43 L990.4,1320.35 L992,1322.85 L993.6,1322.9 L995.2,1321.91 L996.8,1319.79 L998.4,1321.78 L1000,1322.35 L1001.6,1321.14 L1003.2,1319.77 L1004.8,1320.59 L1006.4,1319.31 L1008,1318.84 L1009.6,1316.73 L1011.2,1317.31 L1012.8,1315.08 L1014.4,1315.85 L1016,1315.12 L1017.6,1314.91 L1019.2,1316.24 L1020.8,1319.06 L1022.4,1317.22 L1024,1315.67 L1025.6,1315.29 L1027.2,1315.1 L1028.8,1315.19 L1030.4,1316.57 L1032,1319.24 L1033.6,1321.16 L1035.2,1319.36 L1036.8,1318.19 L1038.4,1318.69 L1040,1317.54 L1041.6,1317.6 L1043.2,1319.63 L1044.8,1323.49 L1046.4,1320.74 L1048,1321.14 L1049.6,1323.42 L1051.2,1325.34 L1052.8,1325.16 L1054.4,1324.65 L1056,1325.32 L1057.6,1326.29 L1059.2,1324.6 L1060.8,1325.11 L1062.4,1323.05 L1064,1319.3 L1065.6,1316.04 L1067.2,1313.45 L1068.8,1313.95 L1070.4,1314.57 L1072,1313.24 L1073.6,1309.52 L1075.2,1307.98 L1076.8,1307.48 L1078.4,1307.07 L1080,1306.38 L1081.6,1306.66 L1083.2,1306.66 L1084.8,1307.33 L1086.4,1307.76 L1088,1309.5 L1089.6,1308.77 L1091.2,1308.73 L1092.8,1308.71 L1094.4,1310.96 L1096,1312.37 L1097.6,1313.36 L1099.2,1314.02 L1100.8,1315.3 L1102.4,1315.73 L1104,1315.93 L1105.6,1314.57 L1107.2,1314.28 L1108.8,1313.14 L1110.4,1313.58 L1112,1315.14 L1113.6,1316.46 L1115.2,1318 L1116.8,1319.73 L1118.4,1317.32 L1120,1317.09 L1121.6,1317.64 L1123.2,1319.03 L1124.8,1317.83 L1126.4,1316.5 L1128,1314.59 L1129.6,1313.77 L1131.2,1311.92 L1132.8,1311.54 L1134.4,1315.62 L1136,1315.86 L1137.6,1314.9 L1139.2,1314.54 L1140.8,1314.73 L1142.4,1314.28 L1144,1314.59 L1145.6,1314.17 L1147.2,1314.25 L1148.8,1313.76 L1150.4,1313.55 L1152,1314.82 L1153.6,1315.22 L1155.2,1316.39 L1156.8,1318.85 L1158.4,1318.37 L1160,1320.08 L1161.6,1320.62 L1163.2,1320.22 L1164.8,1320.21 L1166.4,1317.61 L1168,1316.24 L1169.6,1315.54 L1171.2,1314.79 L1172.8,1314.07 L1174.4,1315.72 L1176,1315.14 L1177.6,1314.01 L1179.2,1312.23 L1180.8,1311.03 L1182.4,1310.41 L1184,1310.78 L1185.6,1310.22 L1187.2,1310.05 L1188.8,1309.04 L1190.4,1309.07 L1192,1309.72 L1193.6,1309.19 L1195.2,1307.31 L1196.8,1308.16 L1198.4,1307.94 L1200,1308.34 L1201.6,1310.11 L1203.2,1313.76 L1204.8,1310.4 L1206.4,1309.48 L1208,1313.18 L1209.6,1315.36 L1211.2,1315.77 L1212.8,1316.47 L1214.4,1317.34 L1216,1316.91 L1217.6,1318.76 L1219.2,1318.64 L1220.8,1319.22 L1222.4,1320.45 L1224,1321.99 L1225.6,1320.91 L1227.2,1321.73 L1228.8,1322.43 L1230.4,1321.84 L1232,1321.92 L1233.6,1321.75 L1235.2,1321.56 L1236.8,1321.16 L1238.4,1320.83 L1240,1321.3 L1241.6,1320.72 L1243.2,1320.92 L1244.8,1320.13 L1246.4,1320.03 L1248,1318.25 L1249.6,1317.74 L1251.2,1319.42 L1252.8,1317.03 L1254.4,1313.61 L1256,1313.95 L1257.6,1315.66 L1259.2,1317.3 L1260.8,1318.27 L1262.4,1319.65 L1264,1318.42 L1265.6,1317.56 L1267.2,1317.93 L1268.8,1320.33 L1270.4,1320.07 L1272,1321.43 L1273.6,1319.03 L1275.2,1315.05 L1276.8,1315.34 L1278.4,1316.9 L1280,1317.38 L1281.6,1315.48 L1283.2,1314.19 L1284.8,1313.11 L1286.4,1313.47 L1288,1311.18 L1289.6,1312.17 L1291.2,1311.7 L1292.8,1312.7 L1294.4,1313.79 L1296,1311.86 L1297.6,1312.18 L1299.2,1310.71 L1300.8,1310.47 L1302.4,1311.41 L1304,1312.35 L1305.6,1313.78 L1307.2,1312.35 L1308.8,1310.82 L1310.4,1310.09 L1312,1312 L1313.6,1313.2 L1315.2,1314.21 L1316.8,1313.69 L1318.4,1312.34 L1320,1310.57 L1321.6,1309.8 L1323.2,1309.66 L1324.8,1319.66 L1326.4,1319.89 L1328,1318.67 L1329.6,1320.19 L1331.2,1319.87 L1332.8,1320.25 L1334.4,1319.19 L1336,1319.37 L1337.6,1319 L1339.2,1319.69 L1340.8,1318.55 L1342.4,1317.73 L1344,1317.43 L1345.6,1316.57 L1347.2,1315.57 L1348.8,1315.08 L1350.4,1315.81 L1352,1314.24 L1353.6,1314.82 L1355.2,1313.41 L1356.8,1313.3 L1358.4,1313.59 L1360,1312.87 L1361.6,1313.05 L1363.2,1313.96 L1364.8,1313.68 L1366.4,1313.41 L1368,1312.94 L1369.6,1313.3 L1371.2,1313.2 L1372.8,1312.66 L1374.4,1314.03 L1376,1313.9 L1377.6,1316.2 L1379.2,1316.77 L1380.8,1318.38 L1382.4,1319.26 L1384,1319.47 L1385.6,1319.63 L1387.2,1321.8 L1388.8,1320.95 L1390.4,1322.16 L1392,1322.06 L1393.6,1321.65 L1395.2,1322.11 L1396.8,1322.21 L1398.4,1320.6 L1400,1320.98 L1401.6,1320.06 L1403.2,1320.32 L1404.8,1319.81 L1406.4,1319.2 L1408,1319.12 L1409.6,1321.21 L1411.2,1324.47 L1412.8,1325.74 L1414.4,1326.39 L1416,1327.36 L1417.6,1327.25 L1419.2,1326 L1420.8,1325.17 L1422.4,1325 L1424,1325.19 L1425.6,1326.17 L1427.2,1326.25 L1428.8,1327.05 L1430.4,1327.61 L1432,1328.7 L1433.6,1329.8 L1435.2,1329.42 L1436.8,1327.82 L1438.4,1326.83 L1440,1326.03 L1441.6,1324.77 L1443.2,1324.78 L1444.8,1325.42 L1446.4,1326.95 L1448,1329.33 L1449.6,1328.95 L1451.2,1330.77 L1452.8,1332.14 L1454.4,1333.34 L1456,1330.47 L1457.6,1328.87 L1459.2,1327.13 L1460.8,1325.7 L1462.4,1324.48 L1464,1325.78 L1465.6,1325.99 L1467.2,1326.42 L1468.8,1325.29 L1470.4,1325.7 L1472,1327.31 L1473.6,1328.04 L1475.2,1326.87 L1476.8,1326.49 L1478.4,1324.85 L1480,1324.97 L1481.6,1325.34 L1483.2,1326.49 L1484.8,1328.14 L1486.4,1329.1 L1488,1327.44 L1489.6,1326.84 L1491.2,1326.57 L1492.8,1326.88 L1494.4,1326.82 L1496,1326.94 L1497.6,1326.19 L1499.2,1325.71 L1500.8,1325.57 L1502.4,1324.66 L1504,1324.55 L1505.6,1323.49 L1507.2,1324.69 L1508.8,1323.57 L1510.4,1324.67 L1512,1324.04 L1513.6,1323.29 L1515.2,1322.84 L1516.8,1323.27 L1518.4,1324.2 L1520,1324.55 L1521.6,1323.73 L1523.2,1323.89 L1524.8,1324.94 L1526.4,1325.28 L1528,1325.17 L1529.6,1325.11 L1531.2,1326.02 L1532.8,1325.19 L1534.4,1325.95 L1536,1326.13 L1537.6,1326.7 L1539.2,1325.81 L1540.8,1325.91 L1542.4,1324.77 L1544,1323.76 L1545.6,1323.2 L1547.2,1323.91 L1548.8,1322.87 L1550.4,1323.21 L1552,1323.75 L1553.6,1325.67 L1555.2,1326.41 L1556.8,1324.99 L1558.4,1323.74 L1560,1323.51 L1561.6,1323.01 L1563.2,1320.79 L1564.8,1319.54 L1566.4,1319.42 L1568,1318.9 L1569.6,1318.71 L1571.2,1317.17 L1572.8,1317.59 L1574.4,1316.82 L1576,1315.73 L1577.6,1314.75 L1579.2,1315.74 L1580.8,1314.16 L1582.4,1314.69 L1584,1313.24 L1585.6,1312.83 L1587.2,1313.41 L1588.8,1313.15 L1590.4,1316.5 L1592,1317.86 L1593.6,1316.91 L1595.2,1316.4 L1596.8,1316.18 L1598.4,1316.06 L1600,1316.01 L1601.6,1315.98 L1603.2,1317.85 L1604.8,1318.94 L1606.4,1321.74 L1608,1321.66 L1609.6,1322.92 L1611.2,1322.6 L1612.8,1322.62 L1614.4,1322.95 L1616,1322.35 L1617.6,1321.5 L1619.2,1321.4 L1620.8,1320.7 L1622.4,1319.58 L1624,1319.99 L1625.6,1322 L1627.2,1322.33 L1628.8,1321.71 L1630.4,1323.51 L1632,1323.66 L1633.6,1324.25 L1635.2,1323.82 L1636.8,1323.18 L1638.4,1322.53 L1640,1322.67 L1641.6,1322.45 L1643.2,1323.18 L1644.8,1321.33 L1646.4,1322.61 L1648,1321.05 L1649.6,1321.13 L1651.2,1321.78 L1652.8,1321.59 L1654.4,1320.7 L1656,1319.82 L1657.6,1320.45 L1659.2,1320.27 L1660.8,1321.26 L1662.4,1319.95 L1663.5,1341.4 L446.4,1341.4 Z" fill="rgb(47,69,84)" fill-opacity="0.09"/>
<path d="M446.4,1320.08 L448,1319.39 L449.6,1319.91 L451.2,1318.49 L452.8,1318.94 L454.4,1318.26 L456,1317.32 L457.6,1317.75 L459.2,1316.59 L460.8,1317.11 L462.4,1316.25 L464,1316.09 L465.6,1316.5 L467.2,1317.02 L468.8,1315.56 L470.4,1316.34 L472,1319.45 L473.6,1322.2 L475.2,1322.32 L476.8,1322.77 L478.4,1322.99 L480,1318.43 L481.6,1319.08 L483.2,1317.73 L484.8,1317.14 L486.4,1316.77 L488,1316.79 L489.6,1317.38 L491.2,1315.91 L492.8,1316.62 L494.4,1316.81 L496,1316.42 L497.6,1316.83 L499.2,1316.05 L500.8,1315.83 L502.4,1315.21 L504,1315.18 L505.6,1313.85 L507.2,1312.76 L508.8,1312.98 L510.4,1313.25 L512,1313.49 L513.6,1315.11 L515.2,1317.18 L516.8,1318.6 L518.4,1321.43 L520,1323.05 L521.6,1324.48 L523.2,1325.01 L524.8,1324.89 L526.4,1325.9 L528,1324.11 L529.6,1324.41 L531.2,1325.03 L532.8,1324.5 L534.4,1325.65 L536,1325.4 L537.6,1326 L539.2,1324.58 L540.8,1323.28 L542.4,1324.3 L544,1323.76 L545.6,1324.92 L547.2,1324.17 L548.8,1322.54 L550.4,1321.51 L552,1321.51 L553.6,1321.01 L555.2,1319.46 L556.8,1319.11 L558.4,1317.33 L560,1317.79 L561.6,1318.41 L563.2,1320.08 L564.8,1320.81 L566.4,1320.89 L568,1320.96 L569.6,1320.19 L571.2,1317.76 L572.8,1318.57 L574.4,1318.49 L576,1318.85 L577.6,1319.19 L579.2,1320.92 L580.8,1320.21 L582.4,1320.88 L584,1321.58 L585.6,1322.79 L587.2,1320.14 L588.8,1319.57 L590.4,1318.53 L592,1317.9 L593.6,1318.26 L595.2,1319.4 L596.8,1318.01 L598.4,1316.84 L600,1316.58 L601.6,1317.45 L603.2,1317.52 L604.8,1315.99 L606.4,1315.97 L608,1316 L609.6,1315.93 L611.2,1316.47 L612.8,1316.77 L614.4,1316.3 L616,1315.95 L617.6,1316.62 L619.2,1316.27 L620.8,1316.37 L622.4,1316.8 L624,1316.07 L625.6,1315.49 L627.2,1315.41 L628.8,1315.6 L630.4,1314.56 L632,1316.17 L633.6,1316.03 L635.2,1316.29 L636.8,1316.23 L638.4,1315.59 L640,1315.68 L641.6,1315.23 L643.2,1316.27 L644.8,1315.24 L646.4,1314.7 L648,1314.4 L649.6,1313.76 L651.2,1313.86 L652.8,1313.17 L654.4,1312.91 L656,1313.01 L657.6,1312.75 L659.2,1313.05 L660.8,1312.27 L662.4,1313.55 L664,1312.6 L665.6,1311.27 L667.2,1310.97 L668.8,1310.66 L670.4,1310.46 L672,1309.82 L673.6,1310.92 L675.2,1310.98 L676.8,1310 L678.4,1310.13 L680,1309.51 L681.6,1309.64 L683.2,1310.18 L684.8,1310.14 L686.4,1311.25 L688,1310.15 L689.6,1310 L691.2,1311.77 L692.8,1311.11 L694.4,1310.53 L696,1311.01 L697.6,1309.65 L699.2,1310.11 L700.8,1310.49 L702.4,1309.85 L704,1309.12 L705.6,1307.9 L707.2,1307.66 L708.8,1308.1 L710.4,1309.99 L712,1308.84 L713.6,1308.35 L715.2,1306.6 L716.8,1308.93 L718.4,1313.64 L720,1314.21 L721.6,1314.23 L723.2,1314.4 L724.8,1314.67 L726.4,1314.79 L728,1314.12 L729.6,1314.9 L731.2,1314.64 L732.8,1314.05 L734.4,1314.05 L736,1314.5 L737.6,1314.43 L739.2,1315.17 L740.8,1315.61 L742.4,1314.66 L744,1315.5 L745.6,1315.7 L747.2,1315.87 L748.8,1315.03 L750.4,1314.99 L752,1315.23 L753.6,1315.39 L755.2,1315.63 L756.8,1316.61 L758.4,1317.65 L760,1318.11 L761.6,1318.02 L763.2,1318.9 L764.8,1319.72 L766.4,1319 L768,1320.6 L769.6,1321.61 L771.2,1321.72 L772.8,1321.31 L774.4,1320.47 L776,1319.58 L777.6,1320.33 L779.2,1319.15 L780.8,1319.64 L782.4,1319.6 L784,1318.21 L785.6,1317.87 L787.2,1318.5 L788.8,1317.81 L790.4,1316.61 L792,1316.33 L793.6,1316.16 L795.2,1317.32 L796.8,1316.93 L798.4,1315.54 L800,1316.56 L801.6,1316.63 L803.2,1316.09 L804.8,1315.7 L806.4,1316.21 L808,1315.62 L809.6,1315.57 L811.2,1317.45 L812.8,1317.03 L814.4,1317.05 L816,1318.6 L817.6,1318.51 L819.2,1320.12 L820.8,1320.85 L822.4,1320.56 L824,1321.45 L825.6,1321.31 L827.2,1320.4 L828.8,1320.58 L830.4,1320.03 L832,1320.37 L833.6,1319.89 L835.2,1321.34 L836.8,1320.39 L838.4,1320.62 L840,1320.89 L841.6,1321.52 L843.2,1318.63 L844.8,1317.19 L846.4,1316.72 L848,1317.05 L849.6,1317.32 L851.2,1316.69 L852.8,1317.73 L854.4,1317.55 L856,1317.51 L857.6,1319.22 L859.2,1318.38 L860.8,1319.21 L862.4,1319.95 L864,1319.93 L865.6,1319.8 L867.2,1320.43 L868.8,1310.46 L870.4,1309.06 L872,1307.2 L873.6,1307.81 L875.2,1308.85 L876.8,1310.5 L878.4,1311.39 L880,1310.91 L881.6,1311.01 L883.2,1311.37 L884.8,1311.64 L886.4,1310.8 L888,1311.9 L889.6,1313.31 L891.2,1314.92 L892.8,1316.15 L894.4,1314.53 L896,1313.49 L897.6,1312.2 L899.2,1311.84 L900.8,1311.68 L902.4,1312.47 L904,1313.07 L905.6,1312.32 L907.2,1313.34 L908.8,1315.94 L910.4,1318.36 L912,1317.76 L913.6,1318.4 L915.2,1319.64 L916.8,1319.64 L918.4,1320.61 L920,1320.97 L921.6,1321.26 L923.2,1317.46 L924.8,1315.31 L926.4,1312.38 L928,1311.79 L929.6,1310.09 L931.2,1309.33 L932.8,1311.1 L934.4,1311.68 L936,1310.76 L937.6,1312.51 L939.2,1312.87 L940.8,1314.38 L942.4,1316.64 L944,1315.69 L945.6,1313.14 L947.2,1312.28 L948.8,1311.09 L950.4,1309.43 L952,1308.96 L953.6,1311.43 L955.2,1312.91 L956.8,1311.49 L958.4,1312.31 L960,1314.49 L961.6,1316.29 L963.2,1318.7 L964.8,1320.82 L966.4,1322.22 L968,1320.89 L969.6,1319.9 L971.2,1319.22 L972.8,1319.55 L974.4,1317.99 L976,1318.28 L977.6,1317.87 L979.2,1320.28 L980.8,1320.44 L982.4,1321.26 L984,1319.89 L985.6,1318.38 L987.2,1319.33 L988.8,1319.43 L990.4,1320.35 L992,1322.85 L993.6,1322.9 L995.2,1321.91 L996.8,1319.79 L998.4,1321.78 L1000,1322.35 L1001.6,1321.14 L1003.2,1319.77 L1004.8,1320.59 L1006.4,1319.31 L1008,1318.84 L1009.6,1316.73 L1011.2,1317.31 L1012.8,1315.08 L1014.4,1315.85 L1016,1315.12 L1017.6,1314.91 L1019.2,1316.24 L1020.8,1319.06 L1022.4,1317.22 L1024,1315.67 L1025.6,1315.29 L1027.2,1315.1 L1028.8,1315.19 L1030.4,1316.57 L1032,1319.24 L1033.6,1321.16 L1035.2,1319.36 L1036.8,1318.19 L1038.4,1318.69 L1040,1317.54 L1041.6,1317.6 L1043.2,1319.63 L1044.8,1323.49 L1046.4,1320.74 L1048,1321.14 L1049.6,1323.42 L1051.2,1325.34 L1052.8,1325.16 L1054.4,1324.65 L1056,1325.32 L1057.6,1326.29 L1059.2,1324.6 L1060.8,1325.11 L1062.4,1323.05 L1064,1319.3 L1065.6,1316.04 L1067.2,1313.45 L1068.8,1313.95 L1070.4,1314.57 L1072,1313.24 L1073.6,1309.52 L1075.2,1307.98 L1076.8,1307.48 L1078.4,1307.07 L1080,1306.38 L1081.6,1306.66 L1083.2,1306.66 L1084.8,1307.33 L1086.4,1307.76 L1088,1309.5 L1089.6,1308.77 L1091.2,1308.73 L1092.8,1308.71 L1094.4,1310.96 L1096,1312.37 L1097.6,1313.36 L1099.2,1314.02 L1100.8,1315.3 L1102.4,1315.73 L1104,1315.93 L1105.6,1314.57 L1107.2,1314.28 L1108.8,1313.14 L1110.4,1313.58 L1112,1315.14 L1113.6,1316.46 L1115.2,1318 L1116.8,1319.73 L1118.4,1317.32 L1120,1317.09 L1121.6,1317.64 L1123.2,1319.03 L1124.8,1317.83 L1126.4,1316.5 L1128,1314.59 L1129.6,1313.77 L1131.2,1311.92 L1132.8,1311.54 L1134.4,1315.62 L1136,1315.86 L1137.6,1314.9 L1139.2,1314.54 L1140.8,1314.73 L1142.4,1314.28 L1144,1314.59 L1145.6,1314.17 L1147.2,1314.25 L1148.8,1313.76 L1150.4,1313.55 L1152,1314.82 L1153.6,1315.22 L1155.2,1316.39 L1156.8,1318.85 L1158.4,1318.37 L1160,1320.08 L1161.6,1320.62 L1163.2,1320.22 L1164.8,1320.21 L1166.4,1317.61 L1168,1316.24 L1169.6,1315.54 L1171.2,1314.79 L1172.8,1314.07 L1174.4,1315.72 L1176,1315.14 L1177.6,1314.01 L1179.2,1312.23 L1180.8,1311.03 L1182.4,1310.41 L1184,1310.78 L1185.6,1310.22 L1187.2,1310.05 L1188.8,1309.04 L1190.4,1309.07 L1192,1309.72 L1193.6,1309.19 L1195.2,1307.31 L1196.8,1308.16 L1198.4,1307.94 L1200,1308.34 L1201.6,1310.11 L1203.2,1313.76 L1204.8,1310.4 L1206.4,1309.48 L1208,1313.18 L1209.6,1315.36 L1211.2,1315.77 L1212.8,1316.47 L1214.4,1317.34 L1216,1316.91 L1217.6,1318.76 L1219.2,1318.64 L1220.8,1319.22 L1222.4,1320.45 L1224,1321.99 L1225.6,1320.91 L1227.2,1321.73 L1228.8,1322.43 L1230.4,1321.84 L1232,1321.92 L1233.6,1321.75 L1235.2,1321.56 L1236.8,1321.16 L1238.4,1320.83 L1240,1321.3 L1241.6,1320.72 L1243.2,1320.92 L1244.8,1320.13 L1246.4,1320.03 L1248,1318.25 L1249.6,1317.74 L1251.2,1319.42 L1252.8,1317.03 L1254.4,1313.61 L1256,1313.95 L1257.6,1315.66 L1259.2,1317.3 L1260.8,1318.27 L1262.4,1319.65 L1264,1318.42 L1265.6,1317.56 L1267.2,1317.93 L1268.8,1320.33 L1270.4,1320.07 L1272,1321.43 L1273.6,1319.03 L1275.2,1315.05 L1276.8,1315.34 L1278.4,1316.9 L1280,1317.38 L1281.6,1315.48 L1283.2,1314.19 L1284.8,1313.11 L1286.4,1313.47 L1288,1311.18 L1289.6,1312.17 L1291.2,1311.7 L1292.8,1312.7 L1294.4,1313.79 L1296,1311.86 L1297.6,1312.18 L1299.2,1310.71 L1300.8,1310.47 L1302.4,1311.41 L1304,1312.35 L1305.6,1313.78 L1307.2,1312.35 L1308.8,1310.82 L1310.4,1310.09 L1312,1312 L1313.6,1313.2 L1315.2,1314.21 L1316.8,1313.69 L1318.4,1312.34 L1320,1310.57 L1321.6,1309.8 L1323.2,1309.66 L1324.8,1319.66 L1326.4,1319.89 L1328,1318.67 L1329.6,1320.19 L1331.2,1319.87 L1332.8,1320.25 L1334.4,1319.19 L1336,1319.37 L1337.6,1319 L1339.2,1319.69 L1340.8,1318.55 L1342.4,1317.73 L1344,1317.43 L1345.6,1316.57 L1347.2,1315.57 L1348.8,1315.08 L1350.4,1315.81 L1352,1314.24 L1353.6,1314.82 L1355.2,1313.41 L1356.8,1313.3 L1358.4,1313.59 L1360,1312.87 L1361.6,1313.05 L1363.2,1313.96 L1364.8,1313.68 L1366.4,1313.41 L1368,1312.94 L1369.6,1313.3 L1371.2,1313.2 L1372.8,1312.66 L1374.4,1314.03 L1376,1313.9 L1377.6,1316.2 L1379.2,1316.77 L1380.8,1318.38 L1382.4,1319.26 L1384,1319.47 L1385.6,1319.63 L1387.2,1321.8 L1388.8,1320.95 L1390.4,1322.16 L1392,1322.06 L1393.6,1321.65 L1395.2,1322.11 L1396.8,1322.21 L1398.4,1320.6 L1400,1320.98 L1401.6,1320.06 L1403.2,1320.32 L1404.8,1319.81 L1406.4,1319.2 L1408,1319.12 L1409.6,1321.21 L1411.2,1324.47 L1412.8,1325.74 L1414.4,1326.39 L1416,1327.36 L1417.6,1327.25 L1419.2,1326 L1420.8,1325.17 L1422.4,1325 L1424,1325.19 L1425.6,1326.17 L1427.2,1326.25 L1428.8,1327.05 L1430.4,1327.61 L1432,1328.7 L1433.6,1329.8 L1435.2,1329.42 L1436.8,1327.82 L1438.4,1326.83 L1440,1326.03 L1441.6,1324.77 L1443.2,1324.78 L1444.8,1325.42 L1446.4,1326.95 L1448,1329.33 L1449.6,1328.95 L1451.2,1330.77 L1452.8,1332.14 L1454.4,1333.34 L1456,1330.47 L1457.6,1328.87 L1459.2,1327.13 L1460.8,1325.7 L1462.4,1324.48 L1464,1325.78 L1465.6,1325.99 L1467.2,1326.42 L1468.8,1325.29 L1470.4,1325.7 L1472,1327.31 L1473.6,1328.04 L1475.2,1326.87 L1476.8,1326.49 L1478.4,1324.85 L1480,1324.97 L1481.6,1325.34 L1483.2,1326.49 L1484.8,1328.14 L1486.4,1329.1 L1488,1327.44 L1489.6,1326.84 L1491.2,1326.57 L1492.8,1326.88 L1494.4,1326.82 L1496,1326.94 L1497.6,1326.19 L1499.2,1325.71 L1500.8,1325.57 L1502.4,1324.66 L1504,1324.55 L1505.6,1323.49 L1507.2,1324.69 L1508.8,1323.57 L1510.4,1324.67 L1512,1324.04 L1513.6,1323.29 L1515.2,1322.84 L1516.8,1323.27 L1518.4,1324.2 L1520,1324.55 L1521.6,1323.73 L1523.2,1323.89 L1524.8,1324.94 L1526.4,1325.28 L1528,1325.17 L1529.6,1325.11 L1531.2,1326.02 L1532.8,1325.19 L1534.4,1325.95 L1536,1326.13 L1537.6,1326.7 L1539.2,1325.81 L1540.8,1325.91 L1542.4,1324.77 L1544,1323.76 L1545.6,1323.2 L1547.2,1323.91 L1548.8,1322.87 L1550.4,1323.21 L1552,1323.75 L1553.6,1325.67 L1555.2,1326.41 L1556.8,1324.99 L1558.4,1323.74 L1560,1323.51 L1561.6,1323.01 L1563.2,1320.79 L1564.8,1319.54 L1566.4,1319.42 L1568,1318.9 L1569.6,1318.71 L1571.2,1317.17 L1572.8,1317.59 L1574.4,1316.82 L1576,1315.73 L1577.6,1314.75 L1579.2,1315.74 L1580.8,1314.16 L1582.4,1314.69 L1584,1313.24 L1585.6,1312.83 L1587.2,1313.41 L1588.8,1313.15 L1590.4,1316.5 L1592,1317.86 L1593.6,1316.91 L1595.2,1316.4 L1596.8,1316.18 L1598.4,1316.06 L1600,1316.01 L1601.6,1315.98 L1603.2,1317.85 L1604.8,1318.94 L1606.4,1321.74 L1608,1321.66 L1609.6,1322.92 L1611.2,1322.6 L1612.8,1322.62 L1614.4,1322.95 L1616,1322.35 L1617.6,1321.5 L1619.2,1321.4 L1620.8,1320.7 L1622.4,1319.58 L1624,1319.99 L1625.6,1322 L1627.2,1322.33 L1628.8,1321.71 L1630.4,1323.51 L1632,1323.66 L1633.6,1324.25 L1635.2,1323.82 L1636.8,1323.18 L1638.4,1322.53 L1640,1322.67 L1641.6,1322.45 L1643.2,1323.18 L1644.8,1321.33 L1646.4,1322.61 L1648,1321.05 L1649.6,1321.13 L1651.2,1321.78 L1652.8,1321.59 L1654.4,1320.7 L1656,1319.82 L1657.6,1320.45 L1659.2,1320.27 L1660.8,1321.26 L1662.4,1319.95" fill="none" stroke="rgb(47,69,84)" stroke-opacity="0.3" stroke-width="0.9"/>
<rect x="1541.9" y="1297.8" width="122.1" height="44.4" fill="rgb(167,183,204)" fill-opacity="0.4"/>
<rect x="1540.7" y="1297.8" width="2.4" height="44.4" fill="#a7b7cc"/>
<rect x="1536.53" y="1310.32" width="10.74" height="19.23" fill="#a7b7cc"/>
<rect x="1538.77" y="1315.61" width="6.27" height="1.81" fill="#eef0f4"/>
<rect x="1538.77" y="1322.45" width="6.27" height="1.81" fill="#eef0f4"/>
<rect x="1662.8" y="1297.8" width="2.4" height="44.4" fill="#a7b7cc"/>
<rect x="1658.63" y="1310.32" width="10.74" height="19.23" fill="#a7b7cc"/>
<rect x="1660.87" y="1315.61" width="6.27" height="1.81" fill="#eef0f4"/>
<rect x="1660.87" y="1322.45" width="6.27" height="1.81" fill="#eef0f4"/>
</svg>
<div class="t" style="left:67.07px;top:19.2px;font-size:29.627px;color:#ffffff;transform:scaleX(0.9668);">DSMR Reader</div>
<div class="t" style="left:56.27px;top:96.9px;font-size:21.479px;color:#e9e9ed;transform:scaleX(0.9657);">Dashboard</div>
<div class="t" style="left:53.78px;top:162.8px;font-size:21.479px;color:#e9e9ed;transform:scaleX(0.9603);">Live grafieken</div>
<div class="t" style="left:54.5px;top:228.8px;font-size:21.479px;color:#e9e9ed;transform:scaleX(0.9896);">Archief</div>
<div class="t" style="left:59.5px;top:295px;font-size:21.479px;color:#e9e9ed;transform:scaleX(0.963);">Vergelijk</div>
<div class="t" style="left:55.5px;top:361px;font-size:21.479px;color:#e9e9ed;transform:scaleX(0.9277);">Trends</div>
<div class="t" style="left:54.52px;top:426.8px;font-size:21.479px;color:#e9e9ed;transform:scaleX(0.9771);">Statistieken</div>
<div class="t" style="left:45.55px;top:493.5px;font-size:21.479px;color:#e9e9ed;transform:scaleX(0.9754);">Energiecontracten</div>
<div class="t" style="left:59.09px;top:589.8px;font-size:19.775px;color:#e9e9ed;transform:scaleX(0.9105);">Over &amp; ondersteuning</div>
<div class="t" style="left:48.58px;top:655.8px;font-size:19.775px;color:#e9e9ed;transform:scaleX(0.9171);">Configuratie</div>
<div class="t" style="left:405.94px;top:23.9px;font-size:21.97px;color:#333333;font-weight:bold;transform:scaleX(0.8644);">Live grafieken</div>
<div class="t" style="left:369.65px;top:120.8px;font-size:21.01px;color:#363644;transform:scaleX(0.9258);">RECENT ELEKTRICITEITSVERBRUIK</div>
<div class="t" style="left:381.76px;top:201.1px;font-size:22.782px;color:#333333;font-weight:bold;transform:scaleX(0.8423);">nu</div>
<div class="t" style="left:410.55px;top:208.1px;font-size:14.946px;color:#777777;font-weight:bold;transform:scaleX(0.8541);">Hoogtarief</div>
<div class="t" style="left:1049.4px;top:205px;font-size:19.864px;color:#ffffff;font-weight:bold;transform:scaleX(0.9485);text-shadow:0 -1px 0 rgba(0,0,0,.25);">369</div>
<div class="t" style="left:1096.7px;top:208px;font-size:14.946px;color:#777777;font-weight:bold;">W</div>
<div class="t" style="left:1268.25px;top:205px;font-size:19.864px;color:#ffffff;font-weight:bold;text-shadow:0 -1px 0 rgba(0,0,0,.25);">0</div>
<div class="t" style="left:1294.7px;top:208px;font-size:14.946px;color:#777777;font-weight:bold;">W</div>
<div class="t" style="left:1476.6px;top:208.1px;font-size:14.946px;color:#777777;font-weight:bold;transform:scaleX(0.9216);">€/uur</div>
<div class="t" style="left:378.38px;top:726.8px;font-size:14.6px;color:#7e7e7e;transform:scaleX(1.0166);">Scroll of knijp de grafiek om in- en uit te zoomen. Om de huidige tijdspositie aan te passen, sleep de grafiek zijwaarts, of gebruik de scrollbalk/controller onder de grafiek. Het is mogelijk om het totaal</div>
<div class="t" style="left:550.79px;top:747.8px;font-size:14.6px;color:#7e7e7e;transform:scaleX(1.0101);">aantal weergegeven uren (tot max. een week terug), inclusief de bijbehorende initiële zoom bij openen, aan te passen in de Frontend-configuratie.</div>
<div class="t" style="left:369.44px;top:836.8px;font-size:21.01px;color:#363644;transform:scaleX(0.9293);">RECENTE VOLTAGES FASEN</div>
<div class="t" style="left:378.38px;top:1356.1px;font-size:14.6px;color:#7e7e7e;transform:scaleX(1.0166);">Scroll of knijp de grafiek om in- en uit te zoomen. Om de huidige tijdspositie aan te passen, sleep de grafiek zijwaarts, of gebruik de scrollbalk/controller onder de grafiek. Het is mogelijk om het totaal</div>
<div class="t" style="left:550.79px;top:1376.8px;font-size:14.6px;color:#7e7e7e;transform:scaleX(1.0101);">aantal weergegeven uren (tot max. een week terug), inclusief de bijbehorende initiële zoom bij openen, aan te passen in de Frontend-configuratie.</div>
<div class="t" style="left:419.85px;top:592.7px;font-size:19.6px;color:#4a4a4a;transform:scaleX(0.9354);">0</div>
<div class="t" style="left:399.27px;top:546.6px;font-size:19.6px;color:#4a4a4a;transform:scaleX(0.9354);">500</div>
<div class="t" style="left:383.36px;top:500.1px;font-size:19.6px;color:#4a4a4a;transform:scaleX(0.9354);">1,000</div>
<div class="t" style="left:383.36px;top:455.0px;font-size:19.6px;color:#4a4a4a;transform:scaleX(0.9354);">1,500</div>
<div class="t" style="left:383.36px;top:408.5px;font-size:19.6px;color:#4a4a4a;transform:scaleX(0.9354);">2,000</div>
<div class="t" style="left:383.36px;top:361.9px;font-size:19.6px;color:#4a4a4a;transform:scaleX(0.9354);">2,500</div>
<div class="t" style="left:383.36px;top:316.9px;font-size:19.6px;color:#4a4a4a;transform:scaleX(0.9354);">3,000</div>
<div class="t" style="left:442.94px;top:613.6px;font-size:19.6px;color:#4a4a4a;transform:scaleX(0.9636);">wo 8:12</div>
<div class="t" style="left:544.49px;top:613.6px;font-size:19.6px;color:#4a4a4a;transform:scaleX(0.9636);">wo 8:24</div>
<div class="t" style="left:646.04px;top:613.6px;font-size:19.6px;color:#4a4a4a;transform:scaleX(0.9636);">wo 8:36</div>
<div class="t" style="left:747.59px;top:613.6px;font-size:19.6px;color:#4a4a4a;transform:scaleX(0.9636);">wo 8:48</div>
<div class="t" style="left:849.14px;top:613.6px;font-size:19.6px;color:#4a4a4a;transform:scaleX(0.9636);">wo 9:00</div>
<div class="t" style="left:950.69px;top:613.6px;font-size:19.6px;color:#4a4a4a;transform:scaleX(0.9636);">wo 9:12</div>
<div class="t" style="left:1052.24px;top:613.6px;font-size:19.6px;color:#4a4a4a;transform:scaleX(0.9636);">wo 9:24</div>
<div class="t" style="left:1153.79px;top:613.6px;font-size:19.6px;color:#4a4a4a;transform:scaleX(0.9636);">wo 9:36</div>
<div class="t" style="left:1255.34px;top:613.6px;font-size:19.6px;color:#4a4a4a;transform:scaleX(0.9636);">wo 9:48</div>
<div class="t" style="left:1351.59px;top:613.6px;font-size:19.6px;color:#4a4a4a;transform:scaleX(0.9636);">wo 10:00</div>
<div class="t" style="left:1453.14px;top:613.6px;font-size:19.6px;color:#4a4a4a;transform:scaleX(0.9636);">wo 10:12</div>
<div class="t" style="left:1554.69px;top:613.6px;font-size:19.6px;color:#4a4a4a;transform:scaleX(0.9636);">wo 10:24</div>
<div class="t" style="left:399.17px;top:1217.5px;font-size:19.6px;color:#4a4a4a;transform:scaleX(0.9354);">230</div>
<div class="t" style="left:399.17px;top:1179.8px;font-size:19.6px;color:#4a4a4a;transform:scaleX(0.9354);">231</div>
<div class="t" style="left:399.17px;top:1141.0px;font-size:19.6px;color:#4a4a4a;transform:scaleX(0.9354);">232</div>
<div class="t" style="left:399.17px;top:1103.3px;font-size:19.6px;color:#4a4a4a;transform:scaleX(0.9354);">233</div>
<div class="t" style="left:399.17px;top:1064.7px;font-size:19.6px;color:#4a4a4a;transform:scaleX(0.9354);">234</div>
<div class="t" style="left:399.17px;top:1025.65px;font-size:19.6px;color:#4a4a4a;transform:scaleX(0.9354);">235</div>
<div class="t" style="left:399.17px;top:988.1px;font-size:19.6px;color:#4a4a4a;transform:scaleX(0.9354);">236</div>
<div class="t" style="left:399.17px;top:948.8px;font-size:19.6px;color:#4a4a4a;transform:scaleX(0.9354);">237</div>
<div class="t" style="left:411.84px;top:1242.6px;font-size:19.6px;color:#4a4a4a;transform:scaleX(0.9636);">wo 19:24</div>
<div class="t" style="left:513.42px;top:1242.6px;font-size:19.6px;color:#4a4a4a;transform:scaleX(0.9636);">wo 19:36</div>
<div class="t" style="left:615.0px;top:1242.6px;font-size:19.6px;color:#4a4a4a;transform:scaleX(0.9636);">wo 19:48</div>
<div class="t" style="left:716.58px;top:1242.6px;font-size:19.6px;color:#4a4a4a;transform:scaleX(0.9636);">wo 20:00</div>
<div class="t" style="left:818.16px;top:1242.6px;font-size:19.6px;color:#4a4a4a;transform:scaleX(0.9636);">wo 20:12</div>
<div class="t" style="left:919.74px;top:1242.6px;font-size:19.6px;color:#4a4a4a;transform:scaleX(0.9636);">wo 20:24</div>
<div class="t" style="left:1021.32px;top:1242.6px;font-size:19.6px;color:#4a4a4a;transform:scaleX(0.9636);">wo 20:36</div>
<div class="t" style="left:1122.9px;top:1242.6px;font-size:19.6px;color:#4a4a4a;transform:scaleX(0.9636);">wo 20:48</div>
<div class="t" style="left:1224.48px;top:1242.6px;font-size:19.6px;color:#4a4a4a;transform:scaleX(0.9636);">wo 21:00</div>
<div class="t" style="left:1326.06px;top:1242.6px;font-size:19.6px;color:#4a4a4a;transform:scaleX(0.9636);">wo 21:12</div>
<div class="t" style="left:1427.64px;top:1242.6px;font-size:19.6px;color:#4a4a4a;transform:scaleX(0.9636);">wo 21:24</div>
<div class="t" style="left:1529.22px;top:1242.6px;font-size:19.6px;color:#4a4a4a;transform:scaleX(0.9636);">wo 21:36</div>
</body></html>
